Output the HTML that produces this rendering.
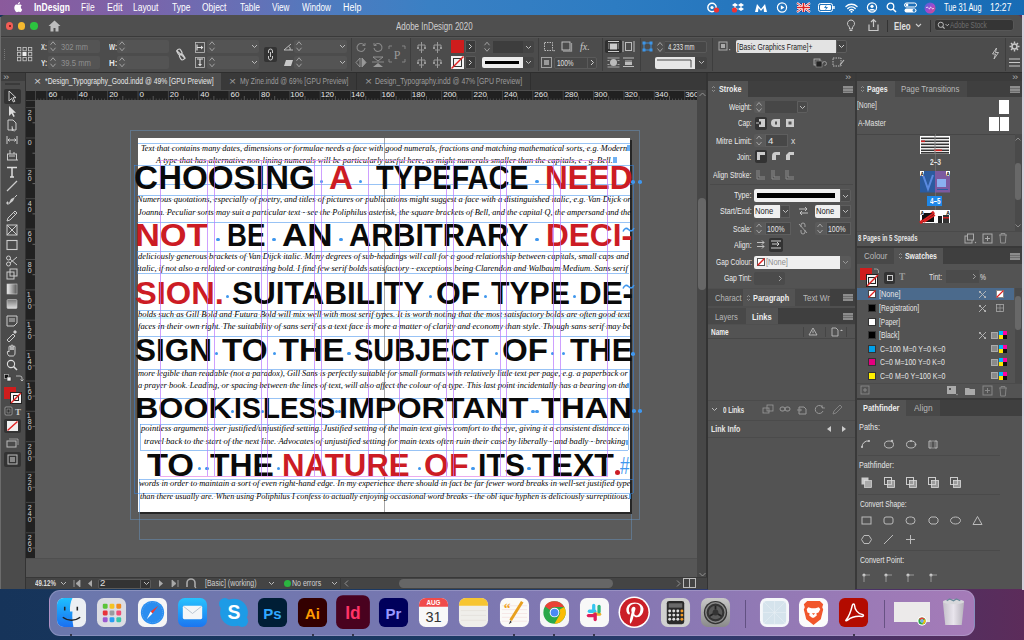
<!DOCTYPE html>
<html><head><meta charset="utf-8"><style>
*{margin:0;padding:0;box-sizing:border-box}
html,body{width:1024px;height:640px;overflow:hidden;background:#1d3b63;font-family:"Liberation Sans",sans-serif}
.a{position:absolute}
svg.a{overflow:visible}
.t{position:absolute;white-space:nowrap;line-height:1;transform-origin:0 0}
.hl{position:absolute;white-space:nowrap;line-height:1;font:bold 31px "Liberation Sans",sans-serif;transform-origin:0 0}
.bt{position:absolute;white-space:nowrap;line-height:1;font:italic 8.8px "Liberation Serif",serif;color:#000;transform-origin:0 0}
.bt b.d{font-weight:normal;color:#58a6ee;-webkit-text-stroke:0}
.bd{position:absolute;width:3.2px;height:3.2px;border-radius:50%;background:#3f97ee}
</style></head><body>
<div class="a" style="left:0px;top:0px;width:1024px;height:640px;background:linear-gradient(90deg,#16345a 0%,#1c3a64 45%,#2e3a6c 70%,#4a3266 85%,#5c2c5a 100%);"></div><div class="a" style="left:1022px;top:15px;width:2px;height:575px;background:#d8d0dc;"></div><div class="a" style="left:0px;top:0px;width:1024px;height:15px;background:linear-gradient(90deg,#8b5a9c 0%,#7e62a8 12%,#6670b6 24%,#4c7cc0 33%,#3a80c4 42%,#2d7cc2 60%,#1f72ba 82%,#186cb5 100%);"></div><svg class="a" style="left:13.5px;top:1.5px;" width="10" height="12" viewBox="0 0 10 12"><g transform="scale(0.82)"><path d="M6.6 2.2c.5-.6.8-1.4.7-2.2-.7 0-1.5.5-2 1.1-.4.5-.8 1.3-.7 2.1.8.1 1.5-.4 2-1zM8.2 6.4c0-1.4 1.1-2 1.2-2.1-.7-1-1.7-1.1-2-1.1-.9-.1-1.7.5-2.1.5-.5 0-1.1-.5-1.9-.5C2.4 3.2 1.4 3.8.9 4.8c-1.1 1.9-.3 4.6.8 6.1.5.7 1.1 1.6 1.9 1.5.8 0 1-.5 1.9-.5s1.1.5 1.9.5c.8 0 1.3-.8 1.8-1.5.6-.8.8-1.6.8-1.7 0 0-1.6-.6-1.6-2.8z" fill="#fff"/></g></svg><div class="t" style="left:33.65px;top:2.20px;color:#fff;font:bold 10px 'Liberation Sans';transform:scale(0.8488,1.0000);">InDesign</div><div class="t" style="left:80.95px;top:2.20px;color:#fff;font:10px 'Liberation Sans';transform:scale(0.8467,1.0000);">File</div><div class="t" style="left:106.61px;top:2.20px;color:#fff;font:10px 'Liberation Sans';transform:scale(0.8937,1.0000);">Edit</div><div class="t" style="left:133.46px;top:2.20px;color:#fff;font:10px 'Liberation Sans';transform:scale(0.8448,1.0000);">Layout</div><div class="t" style="left:171.50px;top:2.20px;color:#fff;font:10px 'Liberation Sans';transform:scale(0.8476,1.0000);">Type</div><div class="t" style="left:201.80px;top:2.20px;color:#fff;font:10px 'Liberation Sans';transform:scale(0.8448,1.0000);">Object</div><div class="t" style="left:239.50px;top:2.20px;color:#fff;font:10px 'Liberation Sans';transform:scale(0.8333,1.0000);">Table</div><div class="t" style="left:271.50px;top:2.20px;color:#fff;font:10px 'Liberation Sans';transform:scale(0.8091,1.0000);">View</div><div class="t" style="left:301.80px;top:2.20px;color:#fff;font:10px 'Liberation Sans';transform:scale(0.8111,1.0000);">Window</div><div class="t" style="left:342.61px;top:2.20px;color:#fff;font:10px 'Liberation Sans';transform:scale(0.8947,1.0000);">Help</div><div class="t" style="left:944.00px;top:2.20px;color:#fff;font:10px 'Liberation Sans';transform:scale(0.7400,1.0000);">Tue 31 Aug</div><div class="t" style="left:990.15px;top:2.20px;color:#fff;font:10px 'Liberation Sans';transform:scale(0.8542,1.0000);">12:27</div><svg class="a" style="left:706px;top:2px;" width="14" height="11" viewBox="0 0 14 11"><circle cx="6" cy="5.5" r="4.2" fill="none" stroke="#fff" stroke-width="1.4"/><circle cx="6" cy="5.5" r="1.6" fill="#fff"/><circle cx="10.5" cy="8" r="2.6" fill="#e33"/></svg><svg class="a" style="left:731px;top:2px;" width="14" height="11" viewBox="0 0 14 11"><path d="M3 1l3 2-3 2-3-2zM9 1l3 2-3 2-3-2zM3 5l3 2-3 2-3-2zM9 5l3 2-3 2-3-2z" fill="#fff" transform="translate(1,0)"/><circle cx="3.5" cy="8" r="2.6" fill="#e33"/></svg><svg class="a" style="left:754px;top:2px;" width="14" height="11" viewBox="0 0 14 11"><path d="M1 10 L3 2 L7 7 L11 2 L13 10 L10 10 L9.5 6 L7 9 L4.5 6 L4 10z" fill="#fff"/></svg><svg class="a" style="left:776px;top:2px;" width="12" height="11" viewBox="0 0 12 11"><circle cx="6" cy="5.5" r="4.6" fill="none" stroke="#fff" stroke-width="1.2"/><path d="M4.8 3.2v4.6l3.6-2.3z" fill="#fff"/></svg><svg class="a" style="left:797px;top:3px;" width="13" height="9" viewBox="0 0 13 9"><rect width="13" height="9" fill="#2a3f8f"/><path d="M0 0L13 9M13 0L0 9" stroke="#fff" stroke-width="2.2"/><path d="M0 0L13 9M13 0L0 9" stroke="#d22" stroke-width="0.9"/><path d="M6.5 0v9M0 4.5h13" stroke="#fff" stroke-width="3"/><path d="M6.5 0v9M0 4.5h13" stroke="#d22" stroke-width="1.6"/></svg><svg class="a" style="left:818px;top:3px;" width="17" height="9" viewBox="0 0 17 9"><rect x="0.5" y="0.5" width="14" height="8" rx="2" fill="none" stroke="#fff" stroke-width="1"/><rect x="2" y="2" width="11" height="5" rx="1" fill="#fff"/><rect x="15.2" y="3" width="1.5" height="3" fill="#fff"/><path d="M8.5 1.5L6 5h2l-1 3 3-4H8z" fill="#2a7bc0"/></svg><svg class="a" style="left:845px;top:2px;" width="13" height="11" viewBox="0 0 13 11"><path d="M1 4.5a8 8 0 0 1 11 0M2.8 6.4a5.3 5.3 0 0 1 7.4 0M4.6 8.2a2.6 2.6 0 0 1 3.8 0" fill="none" stroke="#fff" stroke-width="1.4" stroke-linecap="round"/><circle cx="6.5" cy="9.8" r="1" fill="#fff"/></svg><svg class="a" style="left:866px;top:2px;" width="12" height="11" viewBox="0 0 12 11"><circle cx="6" cy="5.5" r="4.6" fill="none" stroke="#fff" stroke-width="1.2"/><circle cx="6" cy="4.3" r="1.6" fill="#fff"/><path d="M3 8.5c1-1.5 5-1.5 6 0" fill="#fff" stroke="#fff"/></svg><svg class="a" style="left:886px;top:2px;" width="11" height="11" viewBox="0 0 11 11"><circle cx="4.5" cy="4.5" r="3.3" fill="none" stroke="#fff" stroke-width="1.3"/><path d="M7 7l3 3" stroke="#fff" stroke-width="1.5"/></svg><svg class="a" style="left:904px;top:2px;" width="13" height="11" viewBox="0 0 13 11"><rect x="0.5" y="1" width="12" height="4" rx="2" fill="none" stroke="#fff"/><circle cx="3" cy="3" r="1.4" fill="#fff"/><rect x="0.5" y="6.5" width="12" height="4" rx="2" fill="#fff"/><circle cx="10" cy="8.5" r="1.4" fill="#2a7bc0"/></svg><svg class="a" style="left:924px;top:1.5px;" width="12" height="12" viewBox="0 0 12 12"><defs><linearGradient id="sg" x1="0" y1="0" x2="1" y2="1"><stop offset="0" stop-color="#3a6cd8"/><stop offset="0.5" stop-color="#a04ad0"/><stop offset="1" stop-color="#e04a7a"/></linearGradient></defs><circle cx="6" cy="6" r="5.5" fill="url(#sg)"/><path d="M2 6c2-3 3 3 4 0s2 3 4 0" stroke="#fff" stroke-width="0.8" fill="none"/></svg><div class="a" style="left:0px;top:15px;width:1022px;height:574px;background:#4f4f4f;border-radius:5px 5px 0 0;overflow:hidden"></div><div class="a" style="left:0px;top:17px;width:1px;height:572px;background:#6c6c6c;"></div><div class="a" style="left:1px;top:36px;width:1021px;height:1px;background:#3a3a3a;"></div><div class="a" style="left:5.9px;top:22.3px;width:7.4px;height:7.4px;border-radius:50%;background:#f25d55"></div><div class="a" style="left:18.1px;top:22.3px;width:7.4px;height:7.4px;border-radius:50%;background:#f6b92f"></div><div class="a" style="left:30.3px;top:22.3px;width:7.4px;height:7.4px;border-radius:50%;background:#2cc43f"></div><div class="a" style="left:8.6px;top:25px;width:2px;height:2px;border-radius:50%;background:#6a1010"></div><svg class="a" style="left:48px;top:20px;" width="13" height="12" viewBox="0 0 13 12"><path d="M6.5 0.5L0.5 6h2v5.5h3V8h2v3.5h3V6h2z" fill="#bdbdbd"/></svg><div class="t" style="left:395.50px;top:20.50px;color:#cfcfcf;font:10px 'Liberation Sans';transform:scale(0.7969,1.0000);">Adobe InDesign 2020</div><svg class="a" style="left:846px;top:19px;" width="10" height="13" viewBox="0 0 10 13"><path d="M5 1a3.6 3.6 0 0 0-2.2 6.4c.5.4.7.9.7 1.6v1h3V9c0-.7.2-1.2.7-1.6A3.6 3.6 0 0 0 5 1z" fill="none" stroke="#c8c8c8" stroke-width="1"/><path d="M3.6 11.5h2.8" stroke="#c8c8c8"/></svg><svg class="a" style="left:867px;top:18px;" width="13" height="14" viewBox="0 0 13 14"><path d="M2 6.5v6h9v-6" fill="none" stroke="#c8c8c8" stroke-width="1.2"/><path d="M6.5 9V1.5M4 4l2.5-2.5L9 4" fill="none" stroke="#c8c8c8" stroke-width="1.2"/></svg><div class="a" style="left:887px;top:20px;width:1px;height:12px;background:#333;"></div><div class="t" style="left:894.01px;top:20.50px;color:#e0e0e0;font:bold 10px 'Liberation Sans';transform:scale(0.7850,1.0000);">Eleo</div><svg class="a" style="left:915px;top:23px;" width="7" height="5" viewBox="0 0 7 5"><path d="M1 1l2.5 2.5L6 1" fill="none" stroke="#ccc" stroke-width="1.1"/></svg><div class="a" style="left:930px;top:20px;width:1px;height:12px;background:#333;"></div><div class="a" style="left:934px;top:18.8px;width:80px;height:12.5px;border-radius:3px;background:#353535;border:1px solid #575757"></div><svg class="a" style="left:937px;top:21px;" width="13" height="9" viewBox="0 0 13 9"><circle cx="3.8" cy="3.8" r="2.6" fill="none" stroke="#bbb" stroke-width="1"/><path d="M5.6 5.6l2 2" stroke="#bbb" stroke-width="1.1"/><path d="M8.5 3l1.8 1.8L12 3" fill="none" stroke="#bbb" stroke-width="0.9"/></svg><div class="t" style="left:950.00px;top:20.20px;color:#6e6e6e;font:9px 'Liberation Sans';transform:scale(0.7216,1.0000);">Adobe Stock</div><div class="a" style="left:1px;top:37px;width:1021px;height:35px;background:#4c4c4c;"></div><div class="a" style="left:1px;top:37px;width:1021px;height:1px;background:#555;"></div><div class="a" style="left:4px;top:49px;width:1px;height:1px;background:#777;"></div><div class="a" style="left:4px;top:51px;width:1px;height:1px;background:#777;"></div><div class="a" style="left:4px;top:53px;width:1px;height:1px;background:#777;"></div><div class="a" style="left:4px;top:55px;width:1px;height:1px;background:#777;"></div><div class="a" style="left:4px;top:57px;width:1px;height:1px;background:#777;"></div><div class="a" style="left:4px;top:59px;width:1px;height:1px;background:#777;"></div><svg class="a" style="left:16px;top:46px;" width="18" height="16" viewBox="0 0 18 16"><rect x="1.5" y="1.5" width="3.3" height="3.3" fill="none" stroke="#c8c8c8" stroke-width="0.8"/><rect x="7.0" y="1.5" width="3.3" height="3.3" fill="none" stroke="#c8c8c8" stroke-width="0.8"/><rect x="12.5" y="1.5" width="3.3" height="3.3" fill="none" stroke="#c8c8c8" stroke-width="0.8"/><rect x="1.5" y="6.5" width="3.3" height="3.3" fill="none" stroke="#c8c8c8" stroke-width="0.8"/><rect x="6.5" y="6" width="4" height="4" fill="#eee"/><rect x="12.5" y="6.5" width="3.3" height="3.3" fill="none" stroke="#c8c8c8" stroke-width="0.8"/><rect x="1.5" y="11.5" width="3.3" height="3.3" fill="none" stroke="#c8c8c8" stroke-width="0.8"/><rect x="7.0" y="11.5" width="3.3" height="3.3" fill="none" stroke="#c8c8c8" stroke-width="0.8"/><rect x="12.5" y="11.5" width="3.3" height="3.3" fill="none" stroke="#c8c8c8" stroke-width="0.8"/></svg><div class="t" style="left:41.00px;top:42.00px;color:#e6e6e6;font:bold 8.5px 'Liberation Sans';transform:scale(0.6875,1.0000);">X:</div><div class="t" style="left:41.00px;top:57.50px;color:#e6e6e6;font:bold 8.5px 'Liberation Sans';transform:scale(0.7857,1.0000);">Y:</div><div class="t" style="left:109.00px;top:42.00px;color:#e6e6e6;font:bold 8.5px 'Liberation Sans';transform:scale(0.7500,1.0000);">W:</div><div class="t" style="left:109.00px;top:57.50px;color:#e6e6e6;font:bold 8.5px 'Liberation Sans';transform:scale(0.9375,1.0000);">H:</div><div class="a" style="left:48px;top:40px;width:52px;height:12.5px;background:#545454;border-radius:2px"></div><div class="a" style="left:48px;top:40px;width:10px;height:12.5px;background:#555;border-radius:2px 0 0 2px"></div><svg class="a" style="left:48px;top:40px;" width="10" height="12.5" viewBox="0 0 10 12.5"><path d="M2.5 4.75l2.5-3 2.5 3M2.5 7.75l2.5 3 2.5-3" fill="none" stroke="#aaa" stroke-width="0.9"/></svg><div class="a" style="left:48px;top:56px;width:52px;height:12.5px;background:#545454;border-radius:2px"></div><div class="a" style="left:48px;top:56px;width:10px;height:12.5px;background:#555;border-radius:2px 0 0 2px"></div><svg class="a" style="left:48px;top:56px;" width="10" height="12.5" viewBox="0 0 10 12.5"><path d="M2.5 4.75l2.5-3 2.5 3M2.5 7.75l2.5 3 2.5-3" fill="none" stroke="#aaa" stroke-width="0.9"/></svg><div class="a" style="left:117px;top:40px;width:52px;height:12.5px;background:#545454;border-radius:2px"></div><div class="a" style="left:117px;top:40px;width:10px;height:12.5px;background:#555;border-radius:2px 0 0 2px"></div><svg class="a" style="left:117px;top:40px;" width="10" height="12.5" viewBox="0 0 10 12.5"><path d="M2.5 4.75l2.5-3 2.5 3M2.5 7.75l2.5 3 2.5-3" fill="none" stroke="#aaa" stroke-width="0.9"/></svg><div class="a" style="left:117px;top:56px;width:52px;height:12.5px;background:#545454;border-radius:2px"></div><div class="a" style="left:117px;top:56px;width:10px;height:12.5px;background:#555;border-radius:2px 0 0 2px"></div><svg class="a" style="left:117px;top:56px;" width="10" height="12.5" viewBox="0 0 10 12.5"><path d="M2.5 4.75l2.5-3 2.5 3M2.5 7.75l2.5 3 2.5-3" fill="none" stroke="#aaa" stroke-width="0.9"/></svg><div class="t" style="left:61.12px;top:41.50px;color:#8f8f8f;font:8.5px 'Liberation Sans';transform:scale(0.8793,1.0000);">302 mm</div><div class="t" style="left:61.09px;top:57.50px;color:#8f8f8f;font:8.5px 'Liberation Sans';transform:scale(0.9062,1.0000);">39.5 mm</div><svg class="a" style="left:175px;top:48px;" width="12" height="13" viewBox="0 0 12 13"><rect x="2.5" y="1" width="4" height="6" rx="2" fill="none" stroke="#d0d0d0" stroke-width="1.1" transform="rotate(-30 4.5 4)"/><rect x="5" y="6" width="4" height="6" rx="2" fill="none" stroke="#d0d0d0" stroke-width="1.1" transform="rotate(-30 7 9)"/><path d="M1.5 2.5l9 8" stroke="#d0d0d0" stroke-width="1.1"/></svg><svg class="a" style="left:195px;top:42px;" width="10" height="11" viewBox="0 0 10 11"><rect x="0.5" y="0.5" width="9" height="10" fill="none" stroke="#bdbdbd" stroke-width="0.8"/><path d="M2 2.5v6M2 5.5h6" fill="none" stroke="#e0e0e0" stroke-width="1.1"/><path d="M6 3.5l2.3 2-2.3 2z" fill="#e0e0e0"/></svg><svg class="a" style="left:195px;top:57px;" width="10" height="11" viewBox="0 0 10 11"><rect x="0.5" y="0.5" width="9" height="10" fill="none" stroke="#bdbdbd" stroke-width="0.8"/><path d="M2 2h6M5 2v6" fill="none" stroke="#e0e0e0" stroke-width="1.1"/><path d="M3 7l2 2.3 2-2.3z" fill="#e0e0e0"/></svg><div class="a" style="left:207px;top:40px;width:52px;height:12.5px;background:#545454;border-radius:2px"></div><svg class="a" style="left:207px;top:40px;" width="10" height="12.5" viewBox="0 0 10 12.5"><path d="M2.5 4.75l2.5-3 2.5 3M2.5 7.75l2.5 3 2.5-3" fill="none" stroke="#aaa" stroke-width="0.9"/></svg><svg class="a" style="left:251px;top:44px;" width="7" height="5" viewBox="0 0 7 5"><path d="M1 1l2.5 2.5L6 1" fill="none" stroke="#bbb" stroke-width="1"/></svg><div class="a" style="left:207px;top:56px;width:52px;height:12.5px;background:#545454;border-radius:2px"></div><svg class="a" style="left:207px;top:56px;" width="10" height="12.5" viewBox="0 0 10 12.5"><path d="M2.5 4.75l2.5-3 2.5 3M2.5 7.75l2.5 3 2.5-3" fill="none" stroke="#aaa" stroke-width="0.9"/></svg><svg class="a" style="left:251px;top:60px;" width="7" height="5" viewBox="0 0 7 5"><path d="M1 1l2.5 2.5L6 1" fill="none" stroke="#bbb" stroke-width="1"/></svg><div class="a" style="left:264px;top:47px;width:13px;height:15px;background:#333;border-radius:2px"></div><svg class="a" style="left:266px;top:48px;" width="9" height="13" viewBox="0 0 9 13"><path d="M2.5 5V3a2 2 0 0 1 4 0v2M2.5 8v2a2 2 0 0 0 4 0V8M4.5 4v5" fill="none" stroke="#c8c8c8" stroke-width="1"/></svg><svg class="a" style="left:283px;top:43px;" width="11" height="8" viewBox="0 0 11 8"><path d="M1 7h9M1 7l7-6M6 3.5a3 3 0 0 1 1 3.5" fill="none" stroke="#c8c8c8" stroke-width="0.9"/></svg><svg class="a" style="left:283px;top:59px;" width="11" height="8" viewBox="0 0 11 8"><path d="M3 1h7l-2 6H1z" fill="#c8c8c8"/></svg><div class="a" style="left:294px;top:40px;width:53px;height:12.5px;background:#545454;border-radius:2px"></div><svg class="a" style="left:294px;top:40px;" width="10" height="12.5" viewBox="0 0 10 12.5"><path d="M2.5 4.75l2.5-3 2.5 3M2.5 7.75l2.5 3 2.5-3" fill="none" stroke="#aaa" stroke-width="0.9"/></svg><svg class="a" style="left:339px;top:44px;" width="7" height="5" viewBox="0 0 7 5"><path d="M1 1l2.5 2.5L6 1" fill="none" stroke="#bbb" stroke-width="1"/></svg><div class="a" style="left:294px;top:56px;width:53px;height:12.5px;background:#545454;border-radius:2px"></div><svg class="a" style="left:294px;top:56px;" width="10" height="12.5" viewBox="0 0 10 12.5"><path d="M2.5 4.75l2.5-3 2.5 3M2.5 7.75l2.5 3 2.5-3" fill="none" stroke="#aaa" stroke-width="0.9"/></svg><svg class="a" style="left:339px;top:60px;" width="7" height="5" viewBox="0 0 7 5"><path d="M1 1l2.5 2.5L6 1" fill="none" stroke="#bbb" stroke-width="1"/></svg><div class="a" style="left:351px;top:38px;width:1px;height:33px;background:#3e3e3e;"></div><svg class="a" style="left:355px;top:41px;" width="12" height="12" viewBox="0 0 12 12"><path d="M9.5 4.5A4 4 0 1 0 10 7" fill="none" stroke="#888" stroke-width="1.1"/><path d="M7.5 4.5h2.5V2" fill="none" stroke="#888"/></svg><svg class="a" style="left:372px;top:41px;" width="12" height="12" viewBox="0 0 12 12"><path d="M2.5 4.5A4 4 0 1 1 2 7" fill="none" stroke="#888" stroke-width="1.1"/><path d="M4.5 4.5H2V2" fill="none" stroke="#888"/></svg><svg class="a" style="left:355px;top:57px;" width="12" height="11" viewBox="0 0 12 11"><path d="M5 1v9L1 5.5zM7 1v9l4-4.5z" fill="none" stroke="#999" stroke-width="0.9"/><path d="M7 1v9l4-4.5z" fill="#999"/></svg><svg class="a" style="left:372px;top:56px;" width="12" height="12" viewBox="0 0 12 12"><path d="M1 1h10L6 5z" fill="none" stroke="#999" stroke-width="0.9"/><path d="M1 11h10L6 7z" fill="#999"/><path d="M0 6h12" stroke="#999" stroke-width="0.8"/></svg><svg class="a" style="left:388px;top:45px;" width="18" height="18" viewBox="0 0 18 18"><path d="M1 4V1h3M14 1h3v3M1 14v3h3M14 17h3v-3" fill="none" stroke="#8a8a8a" stroke-width="0.9"/><text x="9" y="13.5" font-family="Liberation Serif" font-size="12" fill="#9a9a9a" text-anchor="middle">P</text></svg><div class="a" style="left:410px;top:38px;width:1px;height:33px;background:#3e3e3e;"></div><svg class="a" style="left:416px;top:42px;" width="11" height="11" viewBox="0 0 11 11"><path d="M5.5 0v3M2 3h7M2 3v3M9 3v3M5.5 3v8M3 8h5" fill="none" stroke="#999" stroke-width="1"/><rect x="1" y="5" width="2" height="2" fill="#999"/><rect x="8" y="5" width="2" height="2" fill="#999"/></svg><svg class="a" style="left:432px;top:42px;" width="11" height="11" viewBox="0 0 11 11"><path d="M5.5 0v3M2 3h7M2 3v3M9 3v3M5.5 3v8M3 8h5" fill="none" stroke="#999" stroke-width="1"/><rect x="1" y="5" width="2" height="2" fill="#999"/><rect x="8" y="5" width="2" height="2" fill="#999"/></svg><svg class="a" style="left:416px;top:57px;" width="11" height="11" viewBox="0 0 11 11"><path d="M5.5 0v3M2 3h7M2 3v3M9 3v3M5.5 3v8M3 8h5" fill="none" stroke="#999" stroke-width="1"/><rect x="1" y="5" width="2" height="2" fill="#999"/><rect x="8" y="5" width="2" height="2" fill="#999"/></svg><svg class="a" style="left:432px;top:57px;" width="11" height="11" viewBox="0 0 11 11"><path d="M5.5 0v3M2 3h7M2 3v3M9 3v3M5.5 3v8M3 8h5" fill="none" stroke="#999" stroke-width="1"/><rect x="1" y="5" width="2" height="2" fill="#999"/><rect x="8" y="5" width="2" height="2" fill="#999"/></svg><div class="a" style="left:451px;top:40px;width:12.5px;height:12.5px;background:#cf1d1d;"></div><div class="a" style="left:451px;top:56px;width:12.5px;height:12.5px;background:#f2f2f2;"></div><div class="a" style="left:453px;top:58px;width:8.5px;height:8.5px;background:none;border:1.2px solid #333"></div><svg class="a" style="left:451px;top:56px;" width="13" height="13" viewBox="0 0 13 13"><path d="M0.5 12.5L12.5 0.5" stroke="#e02020" stroke-width="1.4"/></svg><div class="a" style="left:465px;top:40px;width:10.5px;height:12.5px;background:#3b3b3b;border:1px solid #5a5a5a;border-radius:1px"></div><svg class="a" style="left:467px;top:43px;" width="7" height="7" viewBox="0 0 7 7"><path d="M2 1l2.5 2.5L2 6" fill="none" stroke="#ccc" stroke-width="1"/></svg><div class="a" style="left:465px;top:56px;width:10.5px;height:12.5px;background:#3b3b3b;border:1px solid #5a5a5a;border-radius:1px"></div><svg class="a" style="left:467px;top:59px;" width="7" height="7" viewBox="0 0 7 7"><path d="M2 1l2.5 2.5L2 6" fill="none" stroke="#ccc" stroke-width="1"/></svg><div class="a" style="left:482px;top:41px;width:52px;height:11.5px;background:#444;border-radius:2px"></div><div class="a" style="left:482px;top:41px;width:11px;height:11.5px;background:#4d4d4d;"></div><svg class="a" style="left:482px;top:41px;" width="10" height="11.5" viewBox="0 0 10 11.5"><path d="M2.5 4.25l2.5-3 2.5 3M2.5 7.25l2.5 3 2.5-3" fill="none" stroke="#aaa" stroke-width="0.9"/></svg><div class="a" style="left:493px;top:41px;width:30px;height:11.5px;background:#3d3d3d;"></div><svg class="a" style="left:525px;top:45px;" width="7" height="5" viewBox="0 0 7 5"><path d="M1 1l2.5 2.5L6 1" fill="none" stroke="#bbb" stroke-width="1"/></svg><div class="a" style="left:482px;top:56.5px;width:41px;height:11.5px;background:#ececec;border-radius:2px 0 0 2px"></div><div class="a" style="left:485px;top:60.5px;width:34px;height:3.5px;background:#000;"></div><div class="a" style="left:523px;top:56.5px;width:11px;height:11.5px;background:#444;border-radius:0 2px 2px 0"></div><svg class="a" style="left:525px;top:60px;" width="7" height="5" viewBox="0 0 7 5"><path d="M1 1l2.5 2.5L6 1" fill="none" stroke="#bbb" stroke-width="1"/></svg><div class="a" style="left:538px;top:38px;width:1px;height:33px;background:#3e3e3e;"></div><svg class="a" style="left:543px;top:41px;" width="12" height="11" viewBox="0 0 12 11"><rect x="1.5" y="1.5" width="8" height="8" fill="none" stroke="#c8c8c8" stroke-dasharray="1.5 1" stroke-width="0.9"/><rect x="10.5" y="9" width="1.2" height="1.2" fill="#c8c8c8"/></svg><svg class="a" style="left:561px;top:41px;" width="11" height="11" viewBox="0 0 11 11"><rect x="1" y="1" width="8" height="8" fill="none" stroke="#c8c8c8" stroke-width="0.9"/><path d="M2 10h8.5V2" stroke="#999" stroke-width="1.3" fill="none"/></svg><div class="t" style="left:580.00px;top:41.00px;color:#c8c8c8;font:italic 10px 'Liberation Serif';">fx.</div><svg class="a" style="left:541px;top:57px;" width="11" height="11" viewBox="0 0 11 11"><rect x="0.5" y="0.5" width="10" height="10" fill="none" stroke="#aaa" stroke-width="0.9"/><rect x="3" y="3" width="5" height="5" fill="#999"/></svg><div class="a" style="left:554px;top:56.5px;width:43px;height:12px;background:#474747;border:1px solid #5a5a5a;border-radius:2px"></div><div class="t" style="left:557.24px;top:57.50px;color:#e0e0e0;font:8.5px 'Liberation Sans';transform:scale(0.7619,1.0000);">100%</div><div class="a" style="left:587px;top:56.5px;width:1px;height:12px;background:#5a5a5a;"></div><svg class="a" style="left:589px;top:59px;" width="7" height="7" viewBox="0 0 7 7"><path d="M2 1l2.5 2.5L2 6" fill="none" stroke="#ccc" stroke-width="1"/></svg><div class="a" style="left:602px;top:38px;width:1px;height:33px;background:#3e3e3e;"></div><div class="a" style="left:605px;top:40px;width:17px;height:13px;background:#303030;border-radius:2px"></div><svg class="a" style="left:607px;top:41px;" width="13" height="11" viewBox="0 0 13 11"><path d="M1 0.5h11M1 10.5h11" stroke="#ccc"/><rect x="3" y="2.5" width="7" height="6" fill="#ccc"/><path d="M1 3h1.5M1 5h1.5M1 7h1.5M10.5 3H12M10.5 5H12M10.5 7H12" stroke="#ccc" stroke-width="0.8"/></svg><svg class="a" style="left:622px;top:41px;" width="13" height="11" viewBox="0 0 13 11"><rect x="3.5" y="1.5" width="6" height="8" fill="none" stroke="#bbb"/><path d="M1 0v11M12 0v11" stroke="#bbb"/></svg><svg class="a" style="left:607px;top:57px;" width="13" height="11" viewBox="0 0 13 11"><circle cx="6.5" cy="5.5" r="3.5" fill="#bbb"/><path d="M0.5 1h12M0.5 10h12M0.5 3.5h2M10.5 3.5h2M0.5 7.5h2M10.5 7.5h2" stroke="#bbb" stroke-width="0.8"/></svg><svg class="a" style="left:622px;top:57px;" width="13" height="11" viewBox="0 0 13 11"><path d="M1 1h11M3 4h7M1 9.5h11" stroke="#bbb" stroke-width="1"/><rect x="3" y="5" width="7" height="3" fill="#bbb"/></svg><div class="a" style="left:640px;top:38px;width:1px;height:33px;background:#3e3e3e;"></div><svg class="a" style="left:642px;top:41px;" width="11" height="11" viewBox="0 0 11 11"><rect x="2" y="2" width="7" height="7" fill="none" stroke="#3d95e8" stroke-width="0.9"/><rect x="0.5" y="0.5" width="3" height="3" fill="#3d95e8"/><rect x="7.5" y="0.5" width="3" height="3" fill="#3d95e8"/><rect x="0.5" y="7.5" width="3" height="3" fill="#3d95e8"/><rect x="7.5" y="7.5" width="3" height="3" fill="#3d95e8"/></svg><div class="a" style="left:655px;top:40.5px;width:52px;height:12px;background:#474747;border:1px solid #5a5a5a;border-radius:2px"></div><div class="a" style="left:655px;top:40.5px;width:10px;height:12px;background:#4f4f4f;"></div><svg class="a" style="left:655px;top:40.5px;" width="10" height="12" viewBox="0 0 10 12"><path d="M2.5 4.5l2.5-3 2.5 3M2.5 7.5l2.5 3 2.5-3" fill="none" stroke="#aaa" stroke-width="0.9"/></svg><div class="t" style="left:668.00px;top:41.50px;color:#e6e6e6;font:8.5px 'Liberation Sans';transform:scale(0.7027,1.0000);">4.233 mm</div><div class="a" style="left:655px;top:56.5px;width:40px;height:12px;background:#e6e6e6;border-radius:2px 0 0 2px"></div><svg class="a" style="left:656px;top:58px;" width="38" height="10" viewBox="0 0 38 10"><path d="M1 2H35V9.5" fill="none" stroke="#222" stroke-width="0.8"/></svg><div class="a" style="left:695px;top:56.5px;width:12px;height:12px;background:#444;border-radius:0 2px 2px 0"></div><svg class="a" style="left:698px;top:60px;" width="7" height="5" viewBox="0 0 7 5"><path d="M1 1l2.5 2.5L6 1" fill="none" stroke="#bbb" stroke-width="1"/></svg><div class="a" style="left:712px;top:38px;width:1px;height:33px;background:#3e3e3e;"></div><svg class="a" style="left:718px;top:41px;" width="14" height="11" viewBox="0 0 14 11"><rect x="1" y="1" width="8" height="8" fill="none" stroke="#aaa"/><rect x="3" y="3" width="4" height="4" fill="#aaa"/><rect x="11" y="8" width="1.2" height="1.2" fill="#aaa"/></svg><div class="a" style="left:735.5px;top:40px;width:100px;height:12.5px;background:#e3e3e3;border-radius:2px 0 0 2px"></div><div class="t" style="left:737.24px;top:41.50px;color:#1a1a1a;font:9px 'Liberation Sans';transform:scale(0.7602,1.0000);">[Basic Graphics Frame]+</div><div class="a" style="left:835.5px;top:40px;width:11px;height:12.5px;background:#444;border:1px solid #5d5d5d;border-radius:0 2px 2px 0"></div><svg class="a" style="left:837.5px;top:44px;" width="7" height="5" viewBox="0 0 7 5"><path d="M1 1l2.5 2.5L6 1" fill="none" stroke="#ccc" stroke-width="1"/></svg><svg class="a" style="left:813px;top:57px;" width="13" height="11" viewBox="0 0 13 11"><rect x="1" y="2" width="6" height="6" fill="#555" stroke="#bbb" stroke-width="0.8"/><rect x="3" y="4" width="6" height="6" fill="#222" stroke="#999" stroke-width="0.6"/><path d="M9.5 6.5a2 2 0 1 1 2 2" fill="none" stroke="#aaa" stroke-width="0.8"/></svg><svg class="a" style="left:832px;top:57px;" width="14" height="11" viewBox="0 0 14 11"><rect x="1" y="1" width="8" height="8" fill="none" stroke="#bbb" stroke-dasharray="1.5 1"/><path d="M8 8l4-5" stroke="#bbb" stroke-width="1.2"/></svg><svg class="a" style="left:991px;top:47px;" width="9" height="13" viewBox="0 0 9 13"><path d="M5.5 1L1.5 7h3L3 12l4.5-6.5h-3z" fill="none" stroke="#c8c8c8" stroke-width="0.9"/></svg><div class="a" style="left:1005px;top:38px;width:1px;height:33px;background:#3e3e3e;"></div><svg class="a" style="left:1009px;top:41px;" width="11" height="11" viewBox="0 0 11 11"><circle cx="5.5" cy="5.5" r="2.5" fill="none" stroke="#c8c8c8" stroke-width="1.6"/><path d="M5.5 0.5v2M5.5 8.5v2M0.5 5.5h2M8.5 5.5h2M2 2l1.4 1.4M7.6 7.6L9 9M2 9l1.4-1.4M7.6 3.4L9 2" stroke="#c8c8c8" stroke-width="1.4"/></svg><svg class="a" style="left:1009px;top:58px;" width="11" height="9" viewBox="0 0 11 9"><path d="M0 1h11M0 4.5h11M0 8h11" stroke="#c8c8c8" stroke-width="1"/></svg><div class="a" style="left:1px;top:72px;width:1021px;height:1px;background:#2e2e2e;"></div><div class="a" style="left:26px;top:73px;width:681px;height:17px;background:#393939;"></div><div class="a" style="left:26px;top:73px;width:195px;height:17px;background:#4e4e4e;"></div><div class="t" style="left:33.90px;top:75.30px;color:#cfcfcf;font:11px 'Liberation Sans';transform:scale(1.1000,1.0000);">×</div><div class="t" style="left:45.00px;top:76.30px;color:#e8e8e8;font:9px 'Liberation Sans';transform:scale(0.7534,1.0000);">*Design_Typography_Good.indd @ 49% [GPU Preview]</div><div class="t" style="left:229.40px;top:75.30px;color:#9a9a9a;font:11px 'Liberation Sans';transform:scale(1.1000,1.0000);">×</div><div class="t" style="left:240.25px;top:76.30px;color:#9c9c9c;font:9px 'Liberation Sans';transform:scale(0.7465,1.0000);">My Zine.indd @ 69% [GPU Preview]</div><div class="a" style="left:356px;top:73px;width:1px;height:17px;background:#2f2f2f;"></div><div class="t" style="left:364.90px;top:75.30px;color:#9a9a9a;font:11px 'Liberation Sans';transform:scale(1.1000,1.0000);">×</div><div class="t" style="left:375.24px;top:76.30px;color:#9c9c9c;font:9px 'Liberation Sans';transform:scale(0.7644,1.0000);">Design_Typography.indd @ 47% [GPU Preview]</div><div class="a" style="left:530px;top:73px;width:1px;height:17px;background:#2f2f2f;"></div><div class="a" style="left:1px;top:73px;width:24px;height:516px;background:#4b4b4b;"></div><div class="a" style="left:1px;top:73px;width:24px;height:8px;background:#3d3d3d;"></div><div class="t" style="left:2.75px;top:71.50px;color:#aaa;font:9px 'Liberation Sans';transform:scale(1.2500,1.0000);">»</div><div class="a" style="left:5px;top:83px;width:15px;height:2px;background:#3a3a3a;"></div><div class="a" style="left:25px;top:73px;width:1px;height:516px;background:#333;"></div><div class="a" style="left:4px;top:89px;width:17px;height:15px;background:#333;border-radius:2px"></div><svg class="a" style="left:5px;top:89px;" width="14" height="14" viewBox="0 0 14 14"><path d="M4 2v10l2.6-2.6 1.8 3.6 1.4-.7-1.8-3.6H11z" fill="none" stroke="#ddd" stroke-width="0.9"/></svg><svg class="a" style="left:5px;top:104px;" width="14" height="14" viewBox="0 0 14 14"><path d="M4 2v10l2.6-2.6 1.8 3.6 1.4-.7-1.8-3.6H11z" fill="#ddd"/></svg><svg class="a" style="left:5px;top:118px;" width="14" height="14" viewBox="0 0 14 14"><path d="M3 2h5l3 3v7H3z" fill="none" stroke="#ccc"/><path d="M7 8v5l1.3-1.3 1 2" fill="#ccc" stroke="#ccc" stroke-width="0.6"/></svg><svg class="a" style="left:5px;top:133px;" width="14" height="14" viewBox="0 0 14 14"><path d="M2 3v8M12 3v8M3 7h8M4.5 5.5L3 7l1.5 1.5M9.5 5.5L11 7 9.5 8.5" fill="none" stroke="#ccc" stroke-width="1"/></svg><svg class="a" style="left:5px;top:148px;" width="14" height="14" viewBox="0 0 14 14"><rect x="2.5" y="6" width="9" height="6" fill="none" stroke="#ccc"/><path d="M5 2v4M9 4v2M4 8h6" stroke="#ccc"/><path d="M12 11l1 1-1 1" fill="#ccc"/></svg><svg class="a" style="left:5px;top:165px;" width="14" height="14" viewBox="0 0 14 14"><path d="M2 2.5h10M7 2.5V12M5 12h4" fill="none" stroke="#ddd" stroke-width="1.5"/></svg><svg class="a" style="left:5px;top:179px;" width="14" height="14" viewBox="0 0 14 14"><path d="M2 12L12 2" stroke="#ccc" stroke-width="1.2"/></svg><svg class="a" style="left:5px;top:194px;" width="14" height="14" viewBox="0 0 14 14"><path d="M3 11l3-6 4-2-2 4z" fill="#ccc"/><path d="M1 9h3M2.5 7.5v3M10 3l2-2" stroke="#ccc"/></svg><svg class="a" style="left:5px;top:209px;" width="14" height="14" viewBox="0 0 14 14"><path d="M2 12l1-3 7-7 2 2-7 7z" fill="none" stroke="#ccc"/><path d="M8.5 3.5l2 2" stroke="#ccc"/></svg><svg class="a" style="left:5px;top:223px;" width="14" height="14" viewBox="0 0 14 14"><rect x="2" y="2" width="10" height="10" fill="none" stroke="#ccc"/><path d="M2 2l10 10M12 2L2 12" stroke="#ccc"/></svg><svg class="a" style="left:5px;top:238px;" width="14" height="14" viewBox="0 0 14 14"><rect x="2" y="2.5" width="10" height="9" fill="none" stroke="#ccc" stroke-width="1.1"/></svg><svg class="a" style="left:5px;top:254px;" width="14" height="14" viewBox="0 0 14 14"><circle cx="3.5" cy="10" r="2" fill="none" stroke="#ccc"/><circle cx="3.5" cy="4" r="2" fill="none" stroke="#ccc"/><path d="M5 5l7 6M5 9l7-6" stroke="#ccc"/></svg><svg class="a" style="left:5px;top:267px;" width="14" height="14" viewBox="0 0 14 14"><rect x="2" y="5" width="7" height="7" fill="none" stroke="#ccc"/><rect x="5" y="2" width="7" height="7" fill="none" stroke="#ccc"/></svg><svg class="a" style="left:5px;top:282px;" width="14" height="14" viewBox="0 0 14 14"><defs><linearGradient id="gr1"><stop offset="0" stop-color="#eee"/><stop offset="1" stop-color="#555"/></linearGradient></defs><rect x="2" y="2" width="10" height="10" fill="url(#gr1)" stroke="#ccc" stroke-width="0.6"/></svg><svg class="a" style="left:5px;top:297px;" width="14" height="14" viewBox="0 0 14 14"><defs><linearGradient id="gr2" x1="0" y1="0" x2="0" y2="1"><stop offset="0" stop-color="#777"/><stop offset="1" stop-color="#ddd"/></linearGradient></defs><rect x="2" y="2.5" width="10" height="9" rx="1" fill="url(#gr2)" stroke="#ccc" stroke-width="0.6"/></svg><svg class="a" style="left:5px;top:314px;" width="14" height="14" viewBox="0 0 14 14"><path d="M2 2h10v7l-3 3H2z" fill="none" stroke="#ccc"/><path d="M4 5h6M4 7h6" stroke="#ccc"/></svg><svg class="a" style="left:5px;top:328px;" width="14" height="14" viewBox="0 0 14 14"><path d="M2 12l6-6 2 2-6 6z" fill="none" stroke="#ccc"/><path d="M8 4l2-2 2 2-2 2z" fill="#ccc"/></svg><svg class="a" style="left:5px;top:344px;" width="14" height="14" viewBox="0 0 14 14"><path d="M4 12c-2-2-2-4-1-5l1 1V3a1 1 0 0 1 2 0v3V2a1 1 0 0 1 2 0v4-3a1 1 0 0 1 2 0v6c0 2-1 3-2 3z" fill="none" stroke="#ddd" stroke-width="0.9"/></svg><svg class="a" style="left:5px;top:358px;" width="14" height="14" viewBox="0 0 14 14"><circle cx="6" cy="6" r="3.6" fill="none" stroke="#ddd" stroke-width="1.1"/><path d="M8.6 8.6L12 12" stroke="#ddd" stroke-width="1.5"/></svg><svg class="a" style="left:4px;top:374px;" width="8" height="8" viewBox="0 0 8 8"><rect x="0.5" y="0.5" width="4" height="4" fill="#111" stroke="#ccc" stroke-width="0.6"/><rect x="3" y="3" width="4" height="4" fill="#eee" stroke="#333" stroke-width="0.6"/></svg><svg class="a" style="left:15px;top:374px;" width="8" height="8" viewBox="0 0 8 8"><path d="M1 2h4a2 2 0 0 1 2 2v3M5.5 5.5L7 7l1.5-1.5" fill="none" stroke="#ccc" stroke-width="0.8"/></svg><div class="a" style="left:4px;top:387px;width:11.5px;height:11.5px;background:#cf1d1d;"></div><div class="a" style="left:10px;top:392px;width:11.5px;height:11.5px;background:#f5f5f5;border:1px solid #222"></div><div class="a" style="left:12.5px;top:394.5px;width:6.5px;height:6.5px;background:none;border:1.2px solid #222"></div><svg class="a" style="left:10px;top:392px;" width="12" height="12" viewBox="0 0 12 12"><path d="M1 11L11 1" stroke="#e02020" stroke-width="1.5"/></svg><svg class="a" style="left:4px;top:406px;" width="9" height="10" viewBox="0 0 9 10"><rect x="1" y="1" width="7" height="8" rx="1" fill="#333" stroke="#aaa" stroke-width="0.8"/><rect x="3" y="3" width="3" height="4" fill="none" stroke="#aaa" stroke-width="0.6"/></svg><div class="t" style="left:15.00px;top:406.50px;color:#ccc;font:bold 9px 'Liberation Serif';">T</div><div class="a" style="left:4px;top:419px;width:17px;height:14px;background:#333;border-radius:2px"></div><div class="a" style="left:7px;top:421px;width:11px;height:10px;background:#f0f0f0;"></div><svg class="a" style="left:7px;top:421px;" width="11" height="10" viewBox="0 0 11 10"><path d="M0.5 9.5L10.5 0.5" stroke="#e02020" stroke-width="1.4"/></svg><svg class="a" style="left:5px;top:437px;" width="14" height="12" viewBox="0 0 14 12"><rect x="2" y="4" width="9" height="6" fill="none" stroke="#bbb"/><path d="M4 2h9v6" fill="none" stroke="#bbb" stroke-width="0.7"/></svg><div class="a" style="left:4px;top:452px;width:17px;height:15px;background:#333;border-radius:2px"></div><svg class="a" style="left:6px;top:454px;" width="13" height="11" viewBox="0 0 13 11"><rect x="2" y="1" width="9" height="9" fill="none" stroke="#bbb"/><rect x="4" y="3" width="5" height="5" fill="#888"/></svg><div class="a" style="left:26px;top:90.5px;width:671px;height:9.5px;background:#212121;"></div><div class="a" style="left:26px;top:90.5px;width:9px;height:468px;background:#212121;"></div><div class="a" style="left:26px;top:99.5px;width:9px;height:1px;background:#444;"></div><div class="a" style="left:35px;top:90.5px;width:1px;height:9px;background:#444;"></div><svg class="a" style="left:26px;top:91px;" width="671" height="9" viewBox="0 0 671 9"><path d="M20.9 0v9" stroke="#4a4a4a" stroke-width="0.9"/><path d="M36.1 5v4" stroke="#666" stroke-width="0.8"/><path d="M51.3 0v9" stroke="#4a4a4a" stroke-width="0.9"/><path d="M66.4 5v4" stroke="#666" stroke-width="0.8"/><path d="M81.6 0v9" stroke="#4a4a4a" stroke-width="0.9"/><path d="M96.8 5v4" stroke="#666" stroke-width="0.8"/><path d="M112.0 0v9" stroke="#4a4a4a" stroke-width="0.9"/><path d="M127.2 5v4" stroke="#666" stroke-width="0.8"/><path d="M142.4 0v9" stroke="#4a4a4a" stroke-width="0.9"/><path d="M157.6 5v4" stroke="#666" stroke-width="0.8"/><path d="M172.7 0v9" stroke="#4a4a4a" stroke-width="0.9"/><path d="M187.9 5v4" stroke="#666" stroke-width="0.8"/><path d="M203.1 0v9" stroke="#4a4a4a" stroke-width="0.9"/><path d="M218.3 5v4" stroke="#666" stroke-width="0.8"/><path d="M233.5 0v9" stroke="#4a4a4a" stroke-width="0.9"/><path d="M248.7 5v4" stroke="#666" stroke-width="0.8"/><path d="M263.9 0v9" stroke="#4a4a4a" stroke-width="0.9"/><path d="M279.0 5v4" stroke="#666" stroke-width="0.8"/><path d="M294.2 0v9" stroke="#4a4a4a" stroke-width="0.9"/><path d="M309.4 5v4" stroke="#666" stroke-width="0.8"/><path d="M324.6 0v9" stroke="#4a4a4a" stroke-width="0.9"/><path d="M339.8 5v4" stroke="#666" stroke-width="0.8"/><path d="M355.0 0v9" stroke="#4a4a4a" stroke-width="0.9"/><path d="M370.1 5v4" stroke="#666" stroke-width="0.8"/><path d="M385.3 0v9" stroke="#4a4a4a" stroke-width="0.9"/><path d="M400.5 5v4" stroke="#666" stroke-width="0.8"/><path d="M415.7 0v9" stroke="#4a4a4a" stroke-width="0.9"/><path d="M430.9 5v4" stroke="#666" stroke-width="0.8"/><path d="M446.1 0v9" stroke="#4a4a4a" stroke-width="0.9"/><path d="M461.3 5v4" stroke="#666" stroke-width="0.8"/><path d="M476.4 0v9" stroke="#4a4a4a" stroke-width="0.9"/><path d="M491.6 5v4" stroke="#666" stroke-width="0.8"/><path d="M506.8 0v9" stroke="#4a4a4a" stroke-width="0.9"/><path d="M522.0 5v4" stroke="#666" stroke-width="0.8"/><path d="M537.2 0v9" stroke="#4a4a4a" stroke-width="0.9"/><path d="M552.4 5v4" stroke="#666" stroke-width="0.8"/><path d="M567.5 0v9" stroke="#4a4a4a" stroke-width="0.9"/><path d="M582.7 5v4" stroke="#666" stroke-width="0.8"/><path d="M597.9 0v9" stroke="#4a4a4a" stroke-width="0.9"/><path d="M613.1 5v4" stroke="#666" stroke-width="0.8"/><path d="M628.3 0v9" stroke="#4a4a4a" stroke-width="0.9"/><path d="M643.5 5v4" stroke="#666" stroke-width="0.8"/><path d="M658.7 0v9" stroke="#4a4a4a" stroke-width="0.9"/><path d="M11.8 7.5v1.5" stroke="#5a5a5a" stroke-width="0.7"/><path d="M14.8 7.5v1.5" stroke="#5a5a5a" stroke-width="0.7"/><path d="M17.9 7.5v1.5" stroke="#5a5a5a" stroke-width="0.7"/><path d="M23.9 7.5v1.5" stroke="#5a5a5a" stroke-width="0.7"/><path d="M27.0 7.5v1.5" stroke="#5a5a5a" stroke-width="0.7"/><path d="M30.0 7.5v1.5" stroke="#5a5a5a" stroke-width="0.7"/><path d="M33.0 7.5v1.5" stroke="#5a5a5a" stroke-width="0.7"/><path d="M39.1 7.5v1.5" stroke="#5a5a5a" stroke-width="0.7"/><path d="M42.1 7.5v1.5" stroke="#5a5a5a" stroke-width="0.7"/><path d="M45.2 7.5v1.5" stroke="#5a5a5a" stroke-width="0.7"/><path d="M48.2 7.5v1.5" stroke="#5a5a5a" stroke-width="0.7"/><path d="M54.3 7.5v1.5" stroke="#5a5a5a" stroke-width="0.7"/><path d="M57.3 7.5v1.5" stroke="#5a5a5a" stroke-width="0.7"/><path d="M60.4 7.5v1.5" stroke="#5a5a5a" stroke-width="0.7"/><path d="M63.4 7.5v1.5" stroke="#5a5a5a" stroke-width="0.7"/><path d="M69.5 7.5v1.5" stroke="#5a5a5a" stroke-width="0.7"/><path d="M72.5 7.5v1.5" stroke="#5a5a5a" stroke-width="0.7"/><path d="M75.6 7.5v1.5" stroke="#5a5a5a" stroke-width="0.7"/><path d="M78.6 7.5v1.5" stroke="#5a5a5a" stroke-width="0.7"/><path d="M84.7 7.5v1.5" stroke="#5a5a5a" stroke-width="0.7"/><path d="M87.7 7.5v1.5" stroke="#5a5a5a" stroke-width="0.7"/><path d="M90.7 7.5v1.5" stroke="#5a5a5a" stroke-width="0.7"/><path d="M93.8 7.5v1.5" stroke="#5a5a5a" stroke-width="0.7"/><path d="M99.9 7.5v1.5" stroke="#5a5a5a" stroke-width="0.7"/><path d="M102.9 7.5v1.5" stroke="#5a5a5a" stroke-width="0.7"/><path d="M105.9 7.5v1.5" stroke="#5a5a5a" stroke-width="0.7"/><path d="M109.0 7.5v1.5" stroke="#5a5a5a" stroke-width="0.7"/><path d="M115.0 7.5v1.5" stroke="#5a5a5a" stroke-width="0.7"/><path d="M118.1 7.5v1.5" stroke="#5a5a5a" stroke-width="0.7"/><path d="M121.1 7.5v1.5" stroke="#5a5a5a" stroke-width="0.7"/><path d="M124.1 7.5v1.5" stroke="#5a5a5a" stroke-width="0.7"/><path d="M130.2 7.5v1.5" stroke="#5a5a5a" stroke-width="0.7"/><path d="M133.3 7.5v1.5" stroke="#5a5a5a" stroke-width="0.7"/><path d="M136.3 7.5v1.5" stroke="#5a5a5a" stroke-width="0.7"/><path d="M139.3 7.5v1.5" stroke="#5a5a5a" stroke-width="0.7"/><path d="M145.4 7.5v1.5" stroke="#5a5a5a" stroke-width="0.7"/><path d="M148.4 7.5v1.5" stroke="#5a5a5a" stroke-width="0.7"/><path d="M151.5 7.5v1.5" stroke="#5a5a5a" stroke-width="0.7"/><path d="M154.5 7.5v1.5" stroke="#5a5a5a" stroke-width="0.7"/><path d="M160.6 7.5v1.5" stroke="#5a5a5a" stroke-width="0.7"/><path d="M163.6 7.5v1.5" stroke="#5a5a5a" stroke-width="0.7"/><path d="M166.7 7.5v1.5" stroke="#5a5a5a" stroke-width="0.7"/><path d="M169.7 7.5v1.5" stroke="#5a5a5a" stroke-width="0.7"/><path d="M175.8 7.5v1.5" stroke="#5a5a5a" stroke-width="0.7"/><path d="M178.8 7.5v1.5" stroke="#5a5a5a" stroke-width="0.7"/><path d="M181.9 7.5v1.5" stroke="#5a5a5a" stroke-width="0.7"/><path d="M184.9 7.5v1.5" stroke="#5a5a5a" stroke-width="0.7"/><path d="M191.0 7.5v1.5" stroke="#5a5a5a" stroke-width="0.7"/><path d="M194.0 7.5v1.5" stroke="#5a5a5a" stroke-width="0.7"/><path d="M197.0 7.5v1.5" stroke="#5a5a5a" stroke-width="0.7"/><path d="M200.1 7.5v1.5" stroke="#5a5a5a" stroke-width="0.7"/><path d="M206.1 7.5v1.5" stroke="#5a5a5a" stroke-width="0.7"/><path d="M209.2 7.5v1.5" stroke="#5a5a5a" stroke-width="0.7"/><path d="M212.2 7.5v1.5" stroke="#5a5a5a" stroke-width="0.7"/><path d="M215.3 7.5v1.5" stroke="#5a5a5a" stroke-width="0.7"/><path d="M221.3 7.5v1.5" stroke="#5a5a5a" stroke-width="0.7"/><path d="M224.4 7.5v1.5" stroke="#5a5a5a" stroke-width="0.7"/><path d="M227.4 7.5v1.5" stroke="#5a5a5a" stroke-width="0.7"/><path d="M230.4 7.5v1.5" stroke="#5a5a5a" stroke-width="0.7"/><path d="M236.5 7.5v1.5" stroke="#5a5a5a" stroke-width="0.7"/><path d="M239.6 7.5v1.5" stroke="#5a5a5a" stroke-width="0.7"/><path d="M242.6 7.5v1.5" stroke="#5a5a5a" stroke-width="0.7"/><path d="M245.6 7.5v1.5" stroke="#5a5a5a" stroke-width="0.7"/><path d="M251.7 7.5v1.5" stroke="#5a5a5a" stroke-width="0.7"/><path d="M254.7 7.5v1.5" stroke="#5a5a5a" stroke-width="0.7"/><path d="M257.8 7.5v1.5" stroke="#5a5a5a" stroke-width="0.7"/><path d="M260.8 7.5v1.5" stroke="#5a5a5a" stroke-width="0.7"/><path d="M266.9 7.5v1.5" stroke="#5a5a5a" stroke-width="0.7"/><path d="M269.9 7.5v1.5" stroke="#5a5a5a" stroke-width="0.7"/><path d="M273.0 7.5v1.5" stroke="#5a5a5a" stroke-width="0.7"/><path d="M276.0 7.5v1.5" stroke="#5a5a5a" stroke-width="0.7"/><path d="M282.1 7.5v1.5" stroke="#5a5a5a" stroke-width="0.7"/><path d="M285.1 7.5v1.5" stroke="#5a5a5a" stroke-width="0.7"/><path d="M288.1 7.5v1.5" stroke="#5a5a5a" stroke-width="0.7"/><path d="M291.2 7.5v1.5" stroke="#5a5a5a" stroke-width="0.7"/><path d="M297.3 7.5v1.5" stroke="#5a5a5a" stroke-width="0.7"/><path d="M300.3 7.5v1.5" stroke="#5a5a5a" stroke-width="0.7"/><path d="M303.3 7.5v1.5" stroke="#5a5a5a" stroke-width="0.7"/><path d="M306.4 7.5v1.5" stroke="#5a5a5a" stroke-width="0.7"/><path d="M312.4 7.5v1.5" stroke="#5a5a5a" stroke-width="0.7"/><path d="M315.5 7.5v1.5" stroke="#5a5a5a" stroke-width="0.7"/><path d="M318.5 7.5v1.5" stroke="#5a5a5a" stroke-width="0.7"/><path d="M321.6 7.5v1.5" stroke="#5a5a5a" stroke-width="0.7"/><path d="M327.6 7.5v1.5" stroke="#5a5a5a" stroke-width="0.7"/><path d="M330.7 7.5v1.5" stroke="#5a5a5a" stroke-width="0.7"/><path d="M333.7 7.5v1.5" stroke="#5a5a5a" stroke-width="0.7"/><path d="M336.7 7.5v1.5" stroke="#5a5a5a" stroke-width="0.7"/><path d="M342.8 7.5v1.5" stroke="#5a5a5a" stroke-width="0.7"/><path d="M345.8 7.5v1.5" stroke="#5a5a5a" stroke-width="0.7"/><path d="M348.9 7.5v1.5" stroke="#5a5a5a" stroke-width="0.7"/><path d="M351.9 7.5v1.5" stroke="#5a5a5a" stroke-width="0.7"/><path d="M358.0 7.5v1.5" stroke="#5a5a5a" stroke-width="0.7"/><path d="M361.0 7.5v1.5" stroke="#5a5a5a" stroke-width="0.7"/><path d="M364.1 7.5v1.5" stroke="#5a5a5a" stroke-width="0.7"/><path d="M367.1 7.5v1.5" stroke="#5a5a5a" stroke-width="0.7"/><path d="M373.2 7.5v1.5" stroke="#5a5a5a" stroke-width="0.7"/><path d="M376.2 7.5v1.5" stroke="#5a5a5a" stroke-width="0.7"/><path d="M379.3 7.5v1.5" stroke="#5a5a5a" stroke-width="0.7"/><path d="M382.3 7.5v1.5" stroke="#5a5a5a" stroke-width="0.7"/><path d="M388.4 7.5v1.5" stroke="#5a5a5a" stroke-width="0.7"/><path d="M391.4 7.5v1.5" stroke="#5a5a5a" stroke-width="0.7"/><path d="M394.4 7.5v1.5" stroke="#5a5a5a" stroke-width="0.7"/><path d="M397.5 7.5v1.5" stroke="#5a5a5a" stroke-width="0.7"/><path d="M403.6 7.5v1.5" stroke="#5a5a5a" stroke-width="0.7"/><path d="M406.6 7.5v1.5" stroke="#5a5a5a" stroke-width="0.7"/><path d="M409.6 7.5v1.5" stroke="#5a5a5a" stroke-width="0.7"/><path d="M412.7 7.5v1.5" stroke="#5a5a5a" stroke-width="0.7"/><path d="M418.7 7.5v1.5" stroke="#5a5a5a" stroke-width="0.7"/><path d="M421.8 7.5v1.5" stroke="#5a5a5a" stroke-width="0.7"/><path d="M424.8 7.5v1.5" stroke="#5a5a5a" stroke-width="0.7"/><path d="M427.8 7.5v1.5" stroke="#5a5a5a" stroke-width="0.7"/><path d="M433.9 7.5v1.5" stroke="#5a5a5a" stroke-width="0.7"/><path d="M437.0 7.5v1.5" stroke="#5a5a5a" stroke-width="0.7"/><path d="M440.0 7.5v1.5" stroke="#5a5a5a" stroke-width="0.7"/><path d="M443.0 7.5v1.5" stroke="#5a5a5a" stroke-width="0.7"/><path d="M449.1 7.5v1.5" stroke="#5a5a5a" stroke-width="0.7"/><path d="M452.1 7.5v1.5" stroke="#5a5a5a" stroke-width="0.7"/><path d="M455.2 7.5v1.5" stroke="#5a5a5a" stroke-width="0.7"/><path d="M458.2 7.5v1.5" stroke="#5a5a5a" stroke-width="0.7"/><path d="M464.3 7.5v1.5" stroke="#5a5a5a" stroke-width="0.7"/><path d="M467.3 7.5v1.5" stroke="#5a5a5a" stroke-width="0.7"/><path d="M470.4 7.5v1.5" stroke="#5a5a5a" stroke-width="0.7"/><path d="M473.4 7.5v1.5" stroke="#5a5a5a" stroke-width="0.7"/><path d="M479.5 7.5v1.5" stroke="#5a5a5a" stroke-width="0.7"/><path d="M482.5 7.5v1.5" stroke="#5a5a5a" stroke-width="0.7"/><path d="M485.6 7.5v1.5" stroke="#5a5a5a" stroke-width="0.7"/><path d="M488.6 7.5v1.5" stroke="#5a5a5a" stroke-width="0.7"/><path d="M494.7 7.5v1.5" stroke="#5a5a5a" stroke-width="0.7"/><path d="M497.7 7.5v1.5" stroke="#5a5a5a" stroke-width="0.7"/><path d="M500.7 7.5v1.5" stroke="#5a5a5a" stroke-width="0.7"/><path d="M503.8 7.5v1.5" stroke="#5a5a5a" stroke-width="0.7"/><path d="M509.8 7.5v1.5" stroke="#5a5a5a" stroke-width="0.7"/><path d="M512.9 7.5v1.5" stroke="#5a5a5a" stroke-width="0.7"/><path d="M515.9 7.5v1.5" stroke="#5a5a5a" stroke-width="0.7"/><path d="M519.0 7.5v1.5" stroke="#5a5a5a" stroke-width="0.7"/><path d="M525.0 7.5v1.5" stroke="#5a5a5a" stroke-width="0.7"/><path d="M528.1 7.5v1.5" stroke="#5a5a5a" stroke-width="0.7"/><path d="M531.1 7.5v1.5" stroke="#5a5a5a" stroke-width="0.7"/><path d="M534.1 7.5v1.5" stroke="#5a5a5a" stroke-width="0.7"/><path d="M540.2 7.5v1.5" stroke="#5a5a5a" stroke-width="0.7"/><path d="M543.3 7.5v1.5" stroke="#5a5a5a" stroke-width="0.7"/><path d="M546.3 7.5v1.5" stroke="#5a5a5a" stroke-width="0.7"/><path d="M549.3 7.5v1.5" stroke="#5a5a5a" stroke-width="0.7"/><path d="M555.4 7.5v1.5" stroke="#5a5a5a" stroke-width="0.7"/><path d="M558.4 7.5v1.5" stroke="#5a5a5a" stroke-width="0.7"/><path d="M561.5 7.5v1.5" stroke="#5a5a5a" stroke-width="0.7"/><path d="M564.5 7.5v1.5" stroke="#5a5a5a" stroke-width="0.7"/><path d="M570.6 7.5v1.5" stroke="#5a5a5a" stroke-width="0.7"/><path d="M573.6 7.5v1.5" stroke="#5a5a5a" stroke-width="0.7"/><path d="M576.7 7.5v1.5" stroke="#5a5a5a" stroke-width="0.7"/><path d="M579.7 7.5v1.5" stroke="#5a5a5a" stroke-width="0.7"/><path d="M585.8 7.5v1.5" stroke="#5a5a5a" stroke-width="0.7"/><path d="M588.8 7.5v1.5" stroke="#5a5a5a" stroke-width="0.7"/><path d="M591.8 7.5v1.5" stroke="#5a5a5a" stroke-width="0.7"/><path d="M594.9 7.5v1.5" stroke="#5a5a5a" stroke-width="0.7"/><path d="M601.0 7.5v1.5" stroke="#5a5a5a" stroke-width="0.7"/><path d="M604.0 7.5v1.5" stroke="#5a5a5a" stroke-width="0.7"/><path d="M607.0 7.5v1.5" stroke="#5a5a5a" stroke-width="0.7"/><path d="M610.1 7.5v1.5" stroke="#5a5a5a" stroke-width="0.7"/><path d="M616.1 7.5v1.5" stroke="#5a5a5a" stroke-width="0.7"/><path d="M619.2 7.5v1.5" stroke="#5a5a5a" stroke-width="0.7"/><path d="M622.2 7.5v1.5" stroke="#5a5a5a" stroke-width="0.7"/><path d="M625.3 7.5v1.5" stroke="#5a5a5a" stroke-width="0.7"/><path d="M631.3 7.5v1.5" stroke="#5a5a5a" stroke-width="0.7"/><path d="M634.4 7.5v1.5" stroke="#5a5a5a" stroke-width="0.7"/><path d="M637.4 7.5v1.5" stroke="#5a5a5a" stroke-width="0.7"/><path d="M640.4 7.5v1.5" stroke="#5a5a5a" stroke-width="0.7"/><path d="M646.5 7.5v1.5" stroke="#5a5a5a" stroke-width="0.7"/><path d="M649.5 7.5v1.5" stroke="#5a5a5a" stroke-width="0.7"/><path d="M652.6 7.5v1.5" stroke="#5a5a5a" stroke-width="0.7"/><path d="M655.6 7.5v1.5" stroke="#5a5a5a" stroke-width="0.7"/><path d="M661.7 7.5v1.5" stroke="#5a5a5a" stroke-width="0.7"/><path d="M664.7 7.5v1.5" stroke="#5a5a5a" stroke-width="0.7"/><path d="M667.8 7.5v1.5" stroke="#5a5a5a" stroke-width="0.7"/></svg><div class="t" style="left:48.39px;top:90.30px;color:#e8e8e8;font:8px 'Liberation Sans';">60</div><div class="t" style="left:78.76px;top:90.30px;color:#e8e8e8;font:8px 'Liberation Sans';">40</div><div class="t" style="left:109.13px;top:90.30px;color:#e8e8e8;font:8px 'Liberation Sans';">20</div><div class="t" style="left:139.50px;top:90.30px;color:#e8e8e8;font:8px 'Liberation Sans';">0</div><div class="t" style="left:169.87px;top:90.30px;color:#e8e8e8;font:8px 'Liberation Sans';">20</div><div class="t" style="left:200.24px;top:90.30px;color:#e8e8e8;font:8px 'Liberation Sans';">40</div><div class="t" style="left:230.61px;top:90.30px;color:#e8e8e8;font:8px 'Liberation Sans';">60</div><div class="t" style="left:260.98px;top:90.30px;color:#e8e8e8;font:8px 'Liberation Sans';">80</div><div class="t" style="left:290.35px;top:90.30px;color:#e8e8e8;font:8px 'Liberation Sans';">100</div><div class="t" style="left:320.72px;top:90.30px;color:#e8e8e8;font:8px 'Liberation Sans';">120</div><div class="t" style="left:351.09px;top:90.30px;color:#e8e8e8;font:8px 'Liberation Sans';">140</div><div class="t" style="left:381.46px;top:90.30px;color:#e8e8e8;font:8px 'Liberation Sans';">160</div><div class="t" style="left:411.83px;top:90.30px;color:#e8e8e8;font:8px 'Liberation Sans';">180</div><div class="t" style="left:443.20px;top:90.30px;color:#e8e8e8;font:8px 'Liberation Sans';">200</div><div class="t" style="left:473.57px;top:90.30px;color:#e8e8e8;font:8px 'Liberation Sans';">220</div><div class="t" style="left:503.94px;top:90.30px;color:#e8e8e8;font:8px 'Liberation Sans';">240</div><div class="t" style="left:534.31px;top:90.30px;color:#e8e8e8;font:8px 'Liberation Sans';">260</div><div class="t" style="left:564.68px;top:90.30px;color:#e8e8e8;font:8px 'Liberation Sans';">280</div><div class="t" style="left:594.05px;top:90.30px;color:#e8e8e8;font:8px 'Liberation Sans';">300</div><div class="t" style="left:624.42px;top:90.30px;color:#e8e8e8;font:8px 'Liberation Sans';">320</div><div class="t" style="left:654.79px;top:90.30px;color:#e8e8e8;font:8px 'Liberation Sans';">340</div><div class="t" style="left:685.16px;top:90.30px;color:#e8e8e8;font:8px 'Liberation Sans';">360</div><svg class="a" style="left:26px;top:90px;" width="9" height="468" viewBox="0 0 9 468"><path d="M0 17.6h9" stroke="#4a4a4a" stroke-width="0.9"/><path d="M6.5 32.8h2.5" stroke="#777" stroke-width="0.8"/><path d="M0 48.0h9" stroke="#4a4a4a" stroke-width="0.9"/><path d="M6.5 63.2h2.5" stroke="#777" stroke-width="0.8"/><path d="M0 78.4h9" stroke="#4a4a4a" stroke-width="0.9"/><path d="M6.5 93.6h2.5" stroke="#777" stroke-width="0.8"/><path d="M0 108.7h9" stroke="#4a4a4a" stroke-width="0.9"/><path d="M6.5 123.9h2.5" stroke="#777" stroke-width="0.8"/><path d="M0 139.1h9" stroke="#4a4a4a" stroke-width="0.9"/><path d="M6.5 154.3h2.5" stroke="#777" stroke-width="0.8"/><path d="M0 169.5h9" stroke="#4a4a4a" stroke-width="0.9"/><path d="M6.5 184.7h2.5" stroke="#777" stroke-width="0.8"/><path d="M0 199.9h9" stroke="#4a4a4a" stroke-width="0.9"/><path d="M6.5 215.0h2.5" stroke="#777" stroke-width="0.8"/><path d="M0 230.2h9" stroke="#4a4a4a" stroke-width="0.9"/><path d="M6.5 245.4h2.5" stroke="#777" stroke-width="0.8"/><path d="M0 260.6h9" stroke="#4a4a4a" stroke-width="0.9"/><path d="M6.5 275.8h2.5" stroke="#777" stroke-width="0.8"/><path d="M0 291.0h9" stroke="#4a4a4a" stroke-width="0.9"/><path d="M6.5 306.1h2.5" stroke="#777" stroke-width="0.8"/><path d="M0 321.3h9" stroke="#4a4a4a" stroke-width="0.9"/><path d="M6.5 336.5h2.5" stroke="#777" stroke-width="0.8"/><path d="M0 351.7h9" stroke="#4a4a4a" stroke-width="0.9"/><path d="M6.5 366.9h2.5" stroke="#777" stroke-width="0.8"/><path d="M0 382.1h9" stroke="#4a4a4a" stroke-width="0.9"/><path d="M6.5 397.3h2.5" stroke="#777" stroke-width="0.8"/><path d="M0 412.4h9" stroke="#4a4a4a" stroke-width="0.9"/><path d="M6.5 427.6h2.5" stroke="#777" stroke-width="0.8"/><path d="M0 442.8h9" stroke="#4a4a4a" stroke-width="0.9"/><path d="M6.5 458.0h2.5" stroke="#777" stroke-width="0.8"/></svg><div class="t" style="left:27.70px;top:108.73px;color:#d0d0d0;font:7px 'Liberation Sans';">2</div><div class="t" style="left:27.70px;top:114.73px;color:#d0d0d0;font:7px 'Liberation Sans';">0</div><div class="t" style="left:27.70px;top:139.10px;color:#d0d0d0;font:7px 'Liberation Sans';">0</div><div class="t" style="left:27.70px;top:169.47px;color:#d0d0d0;font:7px 'Liberation Sans';">2</div><div class="t" style="left:27.70px;top:175.47px;color:#d0d0d0;font:7px 'Liberation Sans';">0</div><div class="t" style="left:27.70px;top:199.84px;color:#d0d0d0;font:7px 'Liberation Sans';">4</div><div class="t" style="left:27.70px;top:205.84px;color:#d0d0d0;font:7px 'Liberation Sans';">0</div><div class="t" style="left:27.70px;top:230.21px;color:#d0d0d0;font:7px 'Liberation Sans';">6</div><div class="t" style="left:27.70px;top:236.21px;color:#d0d0d0;font:7px 'Liberation Sans';">0</div><div class="t" style="left:27.70px;top:260.58px;color:#d0d0d0;font:7px 'Liberation Sans';">8</div><div class="t" style="left:27.70px;top:266.58px;color:#d0d0d0;font:7px 'Liberation Sans';">0</div><div class="t" style="left:26.70px;top:290.95px;color:#d0d0d0;font:7px 'Liberation Sans';">1</div><div class="t" style="left:27.70px;top:296.95px;color:#d0d0d0;font:7px 'Liberation Sans';">0</div><div class="t" style="left:27.70px;top:302.95px;color:#d0d0d0;font:7px 'Liberation Sans';">0</div><div class="t" style="left:26.70px;top:321.32px;color:#d0d0d0;font:7px 'Liberation Sans';">1</div><div class="t" style="left:27.70px;top:327.32px;color:#d0d0d0;font:7px 'Liberation Sans';">2</div><div class="t" style="left:27.70px;top:333.32px;color:#d0d0d0;font:7px 'Liberation Sans';">0</div><div class="t" style="left:26.70px;top:351.69px;color:#d0d0d0;font:7px 'Liberation Sans';">1</div><div class="t" style="left:27.70px;top:357.69px;color:#d0d0d0;font:7px 'Liberation Sans';">4</div><div class="t" style="left:27.70px;top:363.69px;color:#d0d0d0;font:7px 'Liberation Sans';">0</div><div class="t" style="left:26.70px;top:382.06px;color:#d0d0d0;font:7px 'Liberation Sans';">1</div><div class="t" style="left:27.70px;top:388.06px;color:#d0d0d0;font:7px 'Liberation Sans';">6</div><div class="t" style="left:27.70px;top:394.06px;color:#d0d0d0;font:7px 'Liberation Sans';">0</div><div class="t" style="left:26.70px;top:412.43px;color:#d0d0d0;font:7px 'Liberation Sans';">1</div><div class="t" style="left:27.70px;top:418.43px;color:#d0d0d0;font:7px 'Liberation Sans';">8</div><div class="t" style="left:27.70px;top:424.43px;color:#d0d0d0;font:7px 'Liberation Sans';">0</div><div class="t" style="left:27.70px;top:442.80px;color:#d0d0d0;font:7px 'Liberation Sans';">2</div><div class="t" style="left:27.70px;top:448.80px;color:#d0d0d0;font:7px 'Liberation Sans';">0</div><div class="t" style="left:27.70px;top:454.80px;color:#d0d0d0;font:7px 'Liberation Sans';">0</div><div class="t" style="left:27.70px;top:473.17px;color:#d0d0d0;font:7px 'Liberation Sans';">2</div><div class="t" style="left:27.70px;top:479.17px;color:#d0d0d0;font:7px 'Liberation Sans';">2</div><div class="t" style="left:27.70px;top:485.17px;color:#d0d0d0;font:7px 'Liberation Sans';">0</div><div class="t" style="left:27.70px;top:503.54px;color:#d0d0d0;font:7px 'Liberation Sans';">2</div><div class="t" style="left:27.70px;top:509.54px;color:#d0d0d0;font:7px 'Liberation Sans';">4</div><div class="t" style="left:27.70px;top:515.54px;color:#d0d0d0;font:7px 'Liberation Sans';">0</div><div class="t" style="left:27.70px;top:533.91px;color:#d0d0d0;font:7px 'Liberation Sans';">2</div><div class="t" style="left:27.70px;top:539.91px;color:#d0d0d0;font:7px 'Liberation Sans';">6</div><div class="t" style="left:27.70px;top:545.91px;color:#d0d0d0;font:7px 'Liberation Sans';">0</div><div class="a" style="left:35px;top:100px;width:662px;height:458px;background:#5b5b5b;"></div><div class="a" style="left:26px;top:558px;width:671px;height:19px;background:#565656;"></div><div class="a" style="left:26px;top:558px;width:671px;height:1px;background:#4f4f4f;"></div><div class="a" style="left:697px;top:90px;width:10px;height:487px;background:#474747;"></div><div class="a" style="left:697.8px;top:198.4px;width:8px;height:92px;background:#676767;border-radius:4px"></div><svg class="a" style="left:698px;top:91px;" width="9" height="7" viewBox="0 0 9 7"><path d="M1.5 5l3-3 3 3" fill="none" stroke="#999" stroke-width="0.9"/></svg><svg class="a" style="left:698px;top:571px;" width="9" height="7" viewBox="0 0 9 7"><path d="M1.5 2l3 3 3-3" fill="none" stroke="#999" stroke-width="0.9"/></svg><div class="a" style="left:706px;top:73px;width:2px;height:516px;background:#333;"></div><div class="a" style="left:130px;top:130px;width:509.5px;height:390px;border:1px solid rgba(110,170,230,0.35)"></div><div class="a" style="left:139px;top:512px;width:1px;height:27px;background:rgba(110,170,230,0.35);"></div><div class="a" style="left:139px;top:539px;width:492px;height:1px;background:rgba(110,170,230,0.35);"></div><div class="a" style="left:631px;top:512px;width:1px;height:28px;background:rgba(110,170,230,0.35);"></div><div class="a" style="left:140px;top:140px;width:492px;height:374px;background:#262626;"></div><div class="a" style="left:138px;top:138px;width:492px;height:374px;background:#fff;"></div><div class="a" style="left:384px;top:138px;width:1px;height:374px;background:#a8a8a8;"></div><div class="a" style="left:138px;top:143px;width:492px;height:1px;background:rgba(50,135,235,0.5);"></div><div class="a" style="left:134px;top:165px;width:499px;height:1px;background:rgba(50,135,235,0.5);"></div><div class="a" style="left:138px;top:184px;width:495px;height:1px;background:rgba(50,135,235,0.5);"></div><div class="a" style="left:137px;top:195px;width:493px;height:1px;background:rgba(50,135,235,0.5);"></div><div class="a" style="left:137px;top:222px;width:493px;height:1px;background:rgba(50,135,235,0.5);"></div><div class="a" style="left:137px;top:251px;width:492px;height:1px;background:rgba(50,135,235,0.5);"></div><div class="a" style="left:137px;top:273px;width:492px;height:1px;background:rgba(50,135,235,0.5);"></div><div class="a" style="left:138px;top:310px;width:492px;height:1px;background:rgba(50,135,235,0.5);"></div><div class="a" style="left:138px;top:336px;width:492px;height:1px;background:rgba(50,135,235,0.5);"></div><div class="a" style="left:138px;top:369px;width:491px;height:1px;background:rgba(50,135,235,0.5);"></div><div class="a" style="left:138px;top:398px;width:491px;height:1px;background:rgba(50,135,235,0.5);"></div><div class="a" style="left:140px;top:424px;width:488px;height:1px;background:rgba(50,135,235,0.5);"></div><div class="a" style="left:140px;top:450px;width:488px;height:1px;background:rgba(50,135,235,0.5);"></div><div class="a" style="left:139px;top:479px;width:494px;height:1px;background:rgba(50,135,235,0.5);"></div><div class="a" style="left:134px;top:493px;width:499px;height:1px;background:rgba(50,135,235,0.5);"></div><div class="a" style="left:134px;top:165px;width:1px;height:328px;background:rgba(50,135,235,0.5);"></div><div class="a" style="left:633px;top:165px;width:1px;height:328px;background:rgba(50,135,235,0.5);"></div><div class="a" style="left:137px;top:251px;width:1px;height:22px;background:rgba(50,135,235,0.5);"></div><div class="a" style="left:629px;top:369px;width:1px;height:29px;background:rgba(50,135,235,0.5);"></div><div class="a" style="left:140px;top:424px;width:1px;height:26px;background:rgba(50,135,235,0.5);"></div><div class="a" style="left:628px;top:424px;width:1px;height:26px;background:rgba(50,135,235,0.5);"></div><div class="a" style="left:139px;top:479px;width:1px;height:33px;background:rgba(50,135,235,0.5);"></div><div class="a" style="left:138px;top:317px;width:492px;height:2px;background:#cdf3ff;"></div><div class="hl" style="left:133.93px;top:159.73px;color:#0a0a0a;transform:scale(1.0711,1.0455)">CHOOSING</div>
<div class="hl" style="left:328.93px;top:159.73px;color:#cc1c24;transform:scale(1.0714,1.0455)">A</div>
<div class="hl" style="left:375.70px;top:159.73px;color:#0a0a0a;transform:scale(0.9325,1.0455)">TYPEFACE</div>
<div class="hl" style="left:545.37px;top:159.73px;color:#cc1c24;transform:scale(1.0145,1.0455)">NEED</div>
<div class="bd" style="left:320.2px;top:180.0px"></div>
<div class="bd" style="left:359.0px;top:180.0px"></div>
<div class="bd" style="left:535.4px;top:180.0px"></div>
<div class="hl" style="left:134.78px;top:217.92px;color:#cc1c24;transform:scale(1.1111,1.0136)">NOT</div>
<div class="hl" style="left:227.02px;top:217.92px;color:#0a0a0a;transform:scale(0.8900,1.0136)">BE</div>
<div class="hl" style="left:281.87px;top:217.92px;color:#0a0a0a;transform:scale(1.1310,1.0136)">AN</div>
<div class="hl" style="left:348.71px;top:217.92px;color:#0a0a0a;transform:scale(0.9889,1.0136)">ARBITRARY</div>
<div class="hl" style="left:545.96px;top:217.92px;color:#cc1c24;transform:scale(1.0185,1.0136)">DECI-</div>
<div class="bd" style="left:216.4px;top:237.6px"></div>
<div class="bd" style="left:272.4px;top:237.6px"></div>
<div class="bd" style="left:339.4px;top:237.6px"></div>
<div class="bd" style="left:535.4px;top:237.6px"></div>
<div class="hl" style="left:134.85px;top:275.50px;color:#cc1c24;transform:scale(1.0531,1.0000)">SION.</div>
<div class="hl" style="left:232.48px;top:275.50px;color:#0a0a0a;transform:scale(1.0176,1.0000)">SUITABILITY</div>
<div class="hl" style="left:435.87px;top:275.50px;color:#0a0a0a;transform:scale(1.0268,1.0000)">OF</div>
<div class="hl" style="left:490.70px;top:275.50px;color:#0a0a0a;transform:scale(0.9750,1.0000)">TYPE</div>
<div class="hl" style="left:578.98px;top:275.50px;color:#0a0a0a;transform:scale(1.0120,1.0000)">DE-</div>
<div class="bd" style="left:225.9px;top:294.9px"></div>
<div class="bd" style="left:429.0px;top:294.9px"></div>
<div class="bd" style="left:483.7px;top:294.9px"></div>
<div class="bd" style="left:573.1px;top:294.9px"></div>
<div class="hl" style="left:134.88px;top:333.08px;color:#0a0a0a;transform:scale(1.0151,0.9864)">SIGN</div>
<div class="hl" style="left:221.70px;top:333.08px;color:#0a0a0a;transform:scale(1.0738,0.9864)">TO</div>
<div class="hl" style="left:278.60px;top:333.08px;color:#0a0a0a;transform:scale(1.0541,0.9864)">THE</div>
<div class="hl" style="left:354.07px;top:333.08px;color:#0a0a0a;transform:scale(0.9333,0.9864)">SUBJECT</div>
<div class="hl" style="left:501.93px;top:333.08px;color:#0a0a0a;transform:scale(1.0683,0.9864)">OF</div>
<div class="hl" style="left:570.00px;top:333.08px;color:#0a0a0a;transform:scale(1.0098,0.9864)">THE</div>
<div class="bd" style="left:214.7px;top:352.2px"></div>
<div class="bd" style="left:272.9px;top:352.2px"></div>
<div class="bd" style="left:347.4px;top:352.2px"></div>
<div class="bd" style="left:494.6px;top:352.2px"></div>
<div class="bd" style="left:551.2px;top:352.2px"></div>
<div class="bd" style="left:562.2px;top:352.2px"></div>
<div class="hl" style="left:134.92px;top:391.14px;color:#0a0a0a;transform:scale(1.0411,0.9773)">BOOK</div>
<div class="hl" style="left:234.37px;top:391.14px;color:#0a0a0a;transform:scale(0.9154,0.9773)">IS</div>
<div class="hl" style="left:263.21px;top:391.14px;color:#0a0a0a;transform:scale(0.8936,0.9773)">LESS</div>
<div class="hl" style="left:339.42px;top:391.14px;color:#0a0a0a;transform:scale(1.0417,0.9773)">IMPORTANT</div>
<div class="hl" style="left:541.30px;top:391.14px;color:#0a0a0a;transform:scale(1.0583,0.9773)">THAN</div>
<div class="bd" style="left:231.1px;top:410.0px"></div>
<div class="bd" style="left:260.9px;top:410.0px"></div>
<div class="bd" style="left:334.9px;top:410.0px"></div>
<div class="bd" style="left:337.9px;top:410.0px"></div>
<div class="bd" style="left:531.4px;top:410.0px"></div>
<div class="bd" style="left:535.4px;top:410.0px"></div>
<div class="hl" style="left:147.30px;top:448.05px;color:#0a0a0a;transform:scale(1.1071,0.9909)">TO</div>
<div class="hl" style="left:210.20px;top:448.05px;color:#0a0a0a;transform:scale(1.0295,0.9909)">THE</div>
<div class="hl" style="left:281.99px;top:448.05px;color:#cc1c24;transform:scale(1.0056,0.9909)">NATURE</div>
<div class="hl" style="left:423.96px;top:448.05px;color:#cc1c24;transform:scale(1.0366,0.9909)">OF</div>
<div class="hl" style="left:477.85px;top:448.05px;color:#0a0a0a;transform:scale(0.9733,0.9909)">ITS</div>
<div class="hl" style="left:531.80px;top:448.05px;color:#0a0a0a;transform:scale(1.0342,0.9909)">TEXT</div>
<div class="bd" style="left:197.7px;top:467.2px"></div>
<div class="bd" style="left:205.4px;top:467.2px"></div>
<div class="bd" style="left:277.0px;top:467.2px"></div>
<div class="bd" style="left:418.0px;top:467.2px"></div>
<div class="bd" style="left:471.4px;top:467.2px"></div>
<div class="bd" style="left:527.4px;top:467.2px"></div>
<div class="bt" style="left:141.35px;top:142.50px;transform:scaleX(0.9483)">Text<b class="d">·</b>that<b class="d">·</b>contains<b class="d">·</b>many<b class="d">·</b>dates,<b class="d">·</b>dimensions<b class="d">·</b>or<b class="d">·</b>formulae<b class="d">·</b>needs<b class="d">·</b>a<b class="d">·</b>face<b class="d">·</b>with<b class="d">·</b>good<b class="d">·</b>numerals,<b class="d">·</b>fractions<b class="d">·</b>and<b class="d">·</b>matching<b class="d">·</b>mathematical<b class="d">·</b>sorts,<b class="d">·</b>e.g.<b class="d">·</b>Modern</div>
<div class="bt" style="left:155.80px;top:154.60px;transform:scaleX(0.9584)">A<b class="d">·</b>type<b class="d">·</b>that<b class="d">·</b>has<b class="d">·</b>alternative<b class="d">·</b>non-lining<b class="d">·</b>numerals<b class="d">·</b>will<b class="d">·</b>be<b class="d">·</b>particularly<b class="d">·</b>useful<b class="d">·</b>here,<b class="d">·</b>as<b class="d">·</b>might<b class="d">·</b>numerals<b class="d">·</b>smaller<b class="d">·</b>than<b class="d">·</b>the<b class="d">·</b>capitals,<b class="d">·</b>e<b class="d">·</b>.<b class="d">·</b>g.<b class="d">·</b>Bell.</div>
<div class="bt" style="left:136.83px;top:194.40px;transform:scaleX(0.9655)">Numerous<b class="d">·</b>quotations,<b class="d">·</b>especially<b class="d">·</b>of<b class="d">·</b>poetry,<b class="d">·</b>and<b class="d">·</b>titles<b class="d">·</b>of<b class="d">·</b>pictures<b class="d">·</b>or<b class="d">·</b>publications<b class="d">·</b>might<b class="d">·</b>suggest<b class="d">·</b>a<b class="d">·</b>face<b class="d">·</b>with<b class="d">·</b>a<b class="d">·</b>distinguished<b class="d">·</b>italic,<b class="d">·</b>e.g.<b class="d">·</b>Van<b class="d">·</b>Dijck<b class="d">·</b>or</div>
<div class="bt" style="left:137.60px;top:206.60px;transform:scaleX(0.9487)">Joanna.<b class="d">·</b>Peculiar<b class="d">·</b>sorts<b class="d">·</b>may<b class="d">·</b>suit<b class="d">·</b>a<b class="d">·</b>particular<b class="d">·</b>text<b class="d">·</b>-<b class="d">·</b>see<b class="d">·</b>the<b class="d">·</b>Poliphilus<b class="d">·</b>asterisk,<b class="d">·</b>the<b class="d">·</b>square<b class="d">·</b>brackets<b class="d">·</b>of<b class="d">·</b>Bell,<b class="d">·</b>and<b class="d">·</b>the<b class="d">·</b>capital<b class="d">·</b>Q,<b class="d">·</b>the<b class="d">·</b>ampersand<b class="d">·</b>and<b class="d">·</b>the</div>
<div class="bt" style="left:137.80px;top:250.70px;transform:scaleX(0.9538)">deliciously<b class="d">·</b>generous<b class="d">·</b>brackets<b class="d">·</b>of<b class="d">·</b>Van<b class="d">·</b>Dijck<b class="d">·</b>italic.<b class="d">·</b>Many<b class="d">·</b>degrees<b class="d">·</b>of<b class="d">·</b>sub-headings<b class="d">·</b>will<b class="d">·</b>call<b class="d">·</b>for<b class="d">·</b>a<b class="d">·</b>good<b class="d">·</b>relationship<b class="d">·</b>between<b class="d">·</b>capitals,<b class="d">·</b>small<b class="d">·</b>caps<b class="d">·</b>and</div>
<div class="bt" style="left:136.83px;top:263.00px;transform:scaleX(0.9672)">italic,<b class="d">·</b>if<b class="d">·</b>not<b class="d">·</b>also<b class="d">·</b>a<b class="d">·</b>related<b class="d">·</b>or<b class="d">·</b>contrasting<b class="d">·</b>bold.<b class="d">·</b>I<b class="d">·</b>find<b class="d">·</b>few<b class="d">·</b>serif<b class="d">·</b>bolds<b class="d">·</b>satisfactory<b class="d">·</b>-<b class="d">·</b>exceptions<b class="d">·</b>being<b class="d">·</b>Clarendon<b class="d">·</b>and<b class="d">·</b>Walbaum<b class="d">·</b>Medium.<b class="d">·</b>Sans<b class="d">·</b>serif</div>
<div class="bt" style="left:138.20px;top:309.00px;transform:scaleX(0.9643)">bolds<b class="d">·</b>such<b class="d">·</b>as<b class="d">·</b>Gill<b class="d">·</b>Bold<b class="d">·</b>and<b class="d">·</b>Futura<b class="d">·</b>Bold<b class="d">·</b>will<b class="d">·</b>mix<b class="d">·</b>well<b class="d">·</b>with<b class="d">·</b>most<b class="d">·</b>serif<b class="d">·</b>types.<b class="d">·</b>It<b class="d">·</b>is<b class="d">·</b>worth<b class="d">·</b>noting<b class="d">·</b>that<b class="d">·</b>the<b class="d">·</b>most<b class="d">·</b>satisfactory<b class="d">·</b>bolds<b class="d">·</b>are<b class="d">·</b>often<b class="d">·</b>good<b class="d">·</b>text</div>
<div class="bt" style="left:138.00px;top:321.20px;transform:scaleX(0.9781)">faces<b class="d">·</b>in<b class="d">·</b>their<b class="d">·</b>own<b class="d">·</b>right.<b class="d">·</b>The<b class="d">·</b>suitability<b class="d">·</b>of<b class="d">·</b>sans<b class="d">·</b>serif<b class="d">·</b>as<b class="d">·</b>a<b class="d">·</b>text<b class="d">·</b>face<b class="d">·</b>is<b class="d">·</b>more<b class="d">·</b>a<b class="d">·</b>matter<b class="d">·</b>of<b class="d">·</b>clarity<b class="d">·</b>and<b class="d">·</b>economy<b class="d">·</b>than<b class="d">·</b>style.<b class="d">·</b>Though<b class="d">·</b>sans<b class="d">·</b>serif<b class="d">·</b>may<b class="d">·</b>be</div>
<div class="bt" style="left:138.40px;top:367.60px;transform:scaleX(0.9503)">more<b class="d">·</b>legible<b class="d">·</b>than<b class="d">·</b>readable<b class="d">·</b>(not<b class="d">·</b>a<b class="d">·</b>paradox),<b class="d">·</b>Gill<b class="d">·</b>Sans<b class="d">·</b>is<b class="d">·</b>perfectly<b class="d">·</b>suitable<b class="d">·</b>for<b class="d">·</b>small<b class="d">·</b>formats<b class="d">·</b>with<b class="d">·</b>relatively<b class="d">·</b>little<b class="d">·</b>text<b class="d">·</b>per<b class="d">·</b>page,<b class="d">·</b>e.g.<b class="d">·</b>a<b class="d">·</b>paperback<b class="d">·</b>or</div>
<div class="bt" style="left:138.40px;top:379.80px;transform:scaleX(0.9601)">a<b class="d">·</b>prayer<b class="d">·</b>book.<b class="d">·</b>Leading,<b class="d">·</b>or<b class="d">·</b>spacing<b class="d">·</b>between<b class="d">·</b>the<b class="d">·</b>lines<b class="d">·</b>of<b class="d">·</b>text,<b class="d">·</b>will<b class="d">·</b>also<b class="d">·</b>affect<b class="d">·</b>the<b class="d">·</b>colour<b class="d">·</b>of<b class="d">·</b>a<b class="d">·</b>type.<b class="d">·</b>This<b class="d">·</b>last<b class="d">·</b>point<b class="d">·</b>incidentally<b class="d">·</b>has<b class="d">·</b>a<b class="d">·</b>bearing<b class="d">·</b>on<b class="d">·</b>the</div>
<div class="bt" style="left:140.50px;top:423.40px;transform:scaleX(0.9681)">pointless<b class="d">·</b>arguments<b class="d">·</b>over<b class="d">·</b>justified/unjustified<b class="d">·</b>setting.<b class="d">·</b>Justified<b class="d">·</b>setting<b class="d">·</b>of<b class="d">·</b>the<b class="d">·</b>main<b class="d">·</b>text<b class="d">·</b>gives<b class="d">·</b>comfort<b class="d">·</b>to<b class="d">·</b>the<b class="d">·</b>eye,<b class="d">·</b>giving<b class="d">·</b>it<b class="d">·</b>a<b class="d">·</b>consistent<b class="d">·</b>distance<b class="d">·</b>to</div>
<div class="bt" style="left:144.00px;top:436.00px;transform:scaleX(0.9715)">travel<b class="d">·</b>back<b class="d">·</b>to<b class="d">·</b>the<b class="d">·</b>start<b class="d">·</b>of<b class="d">·</b>the<b class="d">·</b>next<b class="d">·</b>line.<b class="d">·</b>Advocates<b class="d">·</b>of<b class="d">·</b>unjustified<b class="d">·</b>setting<b class="d">·</b>for<b class="d">·</b>main<b class="d">·</b>texts<b class="d">·</b>often<b class="d">·</b>ruin<b class="d">·</b>their<b class="d">·</b>case<b class="d">·</b>by<b class="d">·</b>liberally<b class="d">·</b>-<b class="d">·</b>and<b class="d">·</b>badly<b class="d">·</b>-<b class="d">·</b>breaking</div>
<div class="bt" style="left:139.04px;top:478.20px;transform:scaleX(0.9574)">words<b class="d">·</b>in<b class="d">·</b>order<b class="d">·</b>to<b class="d">·</b>maintain<b class="d">·</b>a<b class="d">·</b>sort<b class="d">·</b>of<b class="d">·</b>even<b class="d">·</b>right-hand<b class="d">·</b>edge.<b class="d">·</b>In<b class="d">·</b>my<b class="d">·</b>experience<b class="d">·</b>there<b class="d">·</b>should<b class="d">·</b>in<b class="d">·</b>fact<b class="d">·</b>be<b class="d">·</b>far<b class="d">·</b>fewer<b class="d">·</b>word<b class="d">·</b>breaks<b class="d">·</b>in<b class="d">·</b>well-set<b class="d">·</b>justified<b class="d">·</b>type</div>
<div class="bt" style="left:140.00px;top:490.80px;transform:scaleX(0.9314)">than<b class="d">·</b>there<b class="d">·</b>usually<b class="d">·</b>are.<b class="d">·</b>When<b class="d">·</b>using<b class="d">·</b>Poliphilus<b class="d">·</b>I<b class="d">·</b>confess<b class="d">·</b>to<b class="d">·</b>actually<b class="d">·</b>enjoying<b class="d">·</b>occasional<b class="d">·</b>word<b class="d">·</b>breaks<b class="d">·</b>-<b class="d">·</b>the<b class="d">·</b>obl<b class="d">·</b>ique<b class="d">·</b>hyphen<b class="d">·</b>is<b class="d">·</b>deliciously<b class="d">·</b>surreptitious.</div><div class="a" style="left:160.0px;top:160px;width:1px;height:316px;background:rgba(185,120,255,0.7)"></div><div class="a" style="left:207.0px;top:160px;width:1px;height:316px;background:rgba(185,120,255,0.7)"></div><div class="a" style="left:213.8px;top:160px;width:1px;height:316px;background:rgba(185,120,255,0.7)"></div><div class="a" style="left:260.9px;top:160px;width:1px;height:316px;background:rgba(185,120,255,0.7)"></div><div class="a" style="left:267.2px;top:160px;width:1px;height:316px;background:rgba(185,120,255,0.7)"></div><div class="a" style="left:314.2px;top:160px;width:1px;height:316px;background:rgba(185,120,255,0.7)"></div><div class="a" style="left:321.0px;top:160px;width:1px;height:316px;background:rgba(185,120,255,0.7)"></div><div class="a" style="left:368.0px;top:160px;width:1px;height:316px;background:rgba(185,120,255,0.7)"></div><div class="a" style="left:398.5px;top:160px;width:1px;height:316px;background:rgba(185,120,255,0.7)"></div><div class="a" style="left:445.9px;top:160px;width:1px;height:316px;background:rgba(185,120,255,0.7)"></div><div class="a" style="left:452.8px;top:160px;width:1px;height:316px;background:rgba(185,120,255,0.7)"></div><div class="a" style="left:499.8px;top:160px;width:1px;height:316px;background:rgba(185,120,255,0.7)"></div><div class="a" style="left:506.1px;top:160px;width:1px;height:316px;background:rgba(185,120,255,0.7)"></div><div class="a" style="left:553.1px;top:160px;width:1px;height:316px;background:rgba(185,120,255,0.7)"></div><div class="a" style="left:560.0px;top:160px;width:1px;height:316px;background:rgba(185,120,255,0.7)"></div><div class="a" style="left:607.3px;top:160px;width:1px;height:316px;background:rgba(185,120,255,0.7)"></div><div class="a" style="left:160px;top:160px;width:448px;height:1px;background:rgba(230,150,235,0.8);"></div><div class="a" style="left:160px;top:476px;width:448px;height:1px;background:rgba(230,150,235,0.8);"></div><div class="bd" style="left:631.2px;top:180.2px;width:3.6px;height:3.6px"></div><div class="bd" style="left:638.2px;top:180.2px;width:3.6px;height:3.6px"></div><div class="bd" style="left:631.2px;top:352.2px;width:3.6px;height:3.6px"></div><div class="bd" style="left:632.2px;top:409.2px;width:3.6px;height:3.6px"></div><div class="bd" style="left:638.2px;top:409.2px;width:3.6px;height:3.6px"></div><div class="a" style="left:614.5px;top:470px;width:5px;height:5px;border-radius:50%;background:#cc1c24"></div><div class="t" style="left:620px;top:453px;font:23px 'Liberation Sans';color:#3f97ee;transform:scaleX(0.75)">#</div><svg class="a" style="left:622px;top:225.5px" width="13" height="8" viewBox="0 0 13 8"><path d="M1 5.5C2.5 2 4.5 1.5 6.5 3.5S10.5 5.5 12 2" fill="none" stroke="#3f97ee" stroke-width="1.6"/></svg><svg class="a" style="left:622px;top:282.5px" width="13" height="8" viewBox="0 0 13 8"><path d="M1 5.5C2.5 2 4.5 1.5 6.5 3.5S10.5 5.5 12 2" fill="none" stroke="#3f97ee" stroke-width="1.6"/></svg><div class="a" style="left:626.5px;top:144.5px;width:3px;height:6px;background:rgba(63,151,238,0.75);"></div><div class="a" style="left:613px;top:157px;width:3.5px;height:6px;background:rgba(63,151,238,0.75);"></div><div class="a" style="left:626.5px;top:383px;width:2.5px;height:5px;background:rgba(63,151,238,0.75);"></div><div class="a" style="left:625.5px;top:440px;width:2.5px;height:5px;background:rgba(63,151,238,0.75);"></div><div class="a" style="left:628.5px;top:494px;width:2.5px;height:5px;background:rgba(63,151,238,0.75);"></div><div class="a" style="left:26px;top:577px;width:681px;height:12px;background:#444444;"></div><div class="a" style="left:26px;top:577px;width:681px;height:1px;background:#383838;"></div><div class="t" style="left:35.00px;top:578.30px;color:#dcdcdc;font:bold 8.5px 'Liberation Sans';transform:scale(0.7241,1.0000);">49.12%</div><svg class="a" style="left:60px;top:581px;" width="7" height="5" viewBox="0 0 7 5"><path d="M1 1l2.5 2.5L6 1" fill="none" stroke="#bbb" stroke-width="1"/></svg><svg class="a" style="left:73px;top:579px;" width="8" height="9" viewBox="0 0 8 9"><path d="M1 1v7M7 1L3 4.5 7 8z" fill="#aaa" stroke="#aaa" stroke-width="0.8"/></svg><svg class="a" style="left:86px;top:579px;" width="7" height="9" viewBox="0 0 7 9"><path d="M6 1L2 4.5 6 8z" fill="#aaa"/></svg><div class="a" style="left:98px;top:578.5px;width:53px;height:10px;background:#333;border:1px solid #5a5a5a;border-radius:2px"></div><div class="t" style="left:100.00px;top:578.30px;color:#e0e0e0;font:8.5px 'Liberation Sans';transform:scale(1.1250,1.0000);">2</div><div class="a" style="left:140px;top:578.5px;width:1px;height:10px;background:#5a5a5a;"></div><svg class="a" style="left:143px;top:581px;" width="7" height="5" viewBox="0 0 7 5"><path d="M1 1l2.5 2.5L6 1" fill="none" stroke="#bbb" stroke-width="1"/></svg><svg class="a" style="left:158px;top:579px;" width="7" height="9" viewBox="0 0 7 9"><path d="M1 1l4 3.5L1 8z" fill="#aaa"/></svg><svg class="a" style="left:171px;top:579px;" width="8" height="9" viewBox="0 0 8 9"><path d="M7 1v7M1 1l4 3.5L1 8z" fill="#aaa" stroke="#aaa" stroke-width="0.8"/></svg><svg class="a" style="left:185px;top:578px;" width="12" height="11" viewBox="0 0 12 11"><path d="M2 9V5a4 4 0 0 1 8 0v4" fill="none" stroke="#aaa" stroke-width="1.6"/><circle cx="10.5" cy="9.5" r="0.8" fill="#aaa"/></svg><div class="t" style="left:205.18px;top:578.30px;color:#cfcfcf;font:8.5px 'Liberation Sans';transform:scale(0.8197,1.0000);">[Basic] (working)</div><svg class="a" style="left:268px;top:581px;" width="7" height="5" viewBox="0 0 7 5"><path d="M1 1l2.5 2.5L6 1" fill="none" stroke="#bbb" stroke-width="1"/></svg><div class="a" style="left:283.5px;top:579.8px;width:7px;height:7px;border-radius:50%;background:#2bb540"></div><div class="t" style="left:292.18px;top:578.30px;color:#d0d0d0;font:8.5px 'Liberation Sans';transform:scale(0.8235,1.0000);">No errors</div><svg class="a" style="left:331px;top:581px;" width="7" height="5" viewBox="0 0 7 5"><path d="M1 1l2.5 2.5L6 1" fill="none" stroke="#bbb" stroke-width="1"/></svg><div class="a" style="left:340px;top:577px;width:1px;height:12px;background:#3a3a3a;"></div><svg class="a" style="left:343px;top:579px;" width="7" height="9" viewBox="0 0 7 9"><path d="M5 1.5L2 4.5 5 7.5" fill="none" stroke="#999" stroke-width="0.9"/></svg><div class="a" style="left:399px;top:579px;width:214px;height:9px;background:#666666;border-radius:4.5px"></div><svg class="a" style="left:675px;top:579px;" width="7" height="9" viewBox="0 0 7 9"><path d="M2 1.5L5 4.5 2 7.5" fill="none" stroke="#999" stroke-width="0.9"/></svg><svg class="a" style="left:683px;top:578px;" width="13" height="10" viewBox="0 0 13 10"><rect x="0.5" y="0.5" width="12" height="9" fill="none" stroke="#bbb"/><path d="M6.5 0.5v9" stroke="#bbb"/></svg><div class="a" style="left:708px;top:73px;width:314px;height:8px;background:#3b3b3b;"></div><div class="t" style="left:844.75px;top:71.50px;color:#aaa;font:9px 'Liberation Sans';transform:scale(1.2500,1.0000);">»</div><div class="t" style="left:1011.75px;top:71.50px;color:#aaa;font:9px 'Liberation Sans';transform:scale(1.2500,1.0000);">»</div><div class="a" style="left:854.5px;top:73px;width:2px;height:516px;background:#393939;"></div><div class="a" style="left:708px;top:81px;width:146.5px;height:15.5px;background:#3f3f3f;"></div><div class="a" style="left:708px;top:81px;width:40px;height:15.5px;background:#535353;"></div><svg class="a" style="left:711px;top:85px;" width="5" height="8" viewBox="0 0 5 8"><path d="M1 3l1.5-1.5L4 3M1 5l1.5 1.5L4 5" fill="none" stroke="#aaa" stroke-width="0.7"/></svg><div class="t" style="left:719.00px;top:84.00px;color:#eeeeee;font:bold 9px 'Liberation Sans';transform:scale(0.8036,1.0000);">Stroke</div><div class="a" style="left:843px;top:86px;width:10px;height:7px;background:linear-gradient(#8c8c8c 0 2px,#6e6e6e 2px 3px,#8c8c8c 3px 4.5px,#6e6e6e 4.5px 5.5px,#8c8c8c 5.5px 7px);"></div><div class="a" style="left:708px;top:96.5px;width:146.5px;height:191px;background:#535353;"></div><div class="t" style="left:728.90px;top:103.00px;color:#ececec;font:8.2px 'Liberation Sans';transform:scale(0.8185,1.0000);">Weight:</div><div class="t" style="left:737.70px;top:119.30px;color:#ececec;font:8.2px 'Liberation Sans';transform:scale(0.7824,1.0000);">Cap:</div><div class="t" style="left:716.11px;top:136.60px;color:#ececec;font:8.2px 'Liberation Sans';transform:scale(0.8947,1.0000);">Mitre Limit:</div><div class="t" style="left:737.00px;top:153.00px;color:#ececec;font:8.2px 'Liberation Sans';transform:scale(0.8235,1.0000);">Join:</div><div class="t" style="left:713.00px;top:171.00px;color:#ececec;font:8.2px 'Liberation Sans';transform:scale(0.8261,1.0000);">Align Stroke:</div><div class="t" style="left:734.40px;top:191.40px;color:#ececec;font:8.2px 'Liberation Sans';transform:scale(0.8737,1.0000);">Type:</div><div class="t" style="left:719.73px;top:207.00px;color:#ececec;font:8.2px 'Liberation Sans';transform:scale(0.8686,1.0000);">Start/End:</div><div class="t" style="left:732.98px;top:224.50px;color:#ececec;font:8.2px 'Liberation Sans';transform:scale(0.8190,1.0000);">Scale:</div><div class="t" style="left:733.80px;top:240.60px;color:#ececec;font:8.2px 'Liberation Sans';transform:scale(0.8600,1.0000);">Align:</div><div class="t" style="left:715.70px;top:258.00px;color:#ececec;font:8.2px 'Liberation Sans';transform:scale(0.8209,1.0000);">Gap Colour:</div><div class="t" style="left:723.60px;top:274.40px;color:#ececec;font:8.2px 'Liberation Sans';transform:scale(0.8303,1.0000);">Gap Tint:</div><div class="a" style="left:754px;top:101px;width:11px;height:12px;background:#5a5a5a;border-radius:2px 0 0 2px"></div><svg class="a" style="left:754px;top:101px;" width="10" height="12" viewBox="0 0 10 12"><path d="M2.5 4.5l2.5-3 2.5 3M2.5 7.5l2.5 3 2.5-3" fill="none" stroke="#aaa" stroke-width="0.9"/></svg><div class="a" style="left:765px;top:101px;width:32px;height:12px;background:#474747;"></div><div class="a" style="left:797px;top:101px;width:11px;height:12px;background:#4a4a4a;border:1px solid #5e5e5e;border-radius:0 2px 2px 0"></div><svg class="a" style="left:799px;top:105px;" width="7" height="5" viewBox="0 0 7 5"><path d="M1 1l2.5 2.5L6 1" fill="none" stroke="#bbb" stroke-width="1"/></svg><div class="a" style="left:755px;top:116.5px;width:12px;height:13px;background:#333;border-radius:2px"></div><svg class="a" style="left:756px;top:118px;" width="10" height="10" viewBox="0 0 10 10"><rect x="3" y="1" width="6" height="8" fill="#ccc"/><path d="M0 5h3" stroke="#ccc"/><rect x="3" y="3.5" width="2" height="3" fill="#333"/></svg><svg class="a" style="left:771px;top:118px;" width="10" height="10" viewBox="0 0 10 10"><path d="M4 1h5v8H4a4 4 0 0 1 0-8z" fill="#ccc"/><rect x="4" y="3.5" width="2" height="3" fill="#535353"/></svg><svg class="a" style="left:785px;top:118px;" width="10" height="10" viewBox="0 0 10 10"><rect x="1" y="1" width="8" height="8" fill="#ccc"/><rect x="3.5" y="3.5" width="3" height="3" fill="#535353"/></svg><div class="a" style="left:754px;top:134px;width:11px;height:13px;background:#5a5a5a;border-radius:2px 0 0 2px"></div><svg class="a" style="left:754px;top:134px;" width="10" height="13" viewBox="0 0 10 13"><path d="M2.5 5.0l2.5-3 2.5 3M2.5 8.0l2.5 3 2.5-3" fill="none" stroke="#aaa" stroke-width="0.9"/></svg><div class="a" style="left:765px;top:134px;width:23px;height:13px;background:#474747;border:1px solid #5e5e5e"></div><div class="t" style="left:768.00px;top:135.60px;color:#e6e6e6;font:8.5px 'Liberation Sans';transform:scale(1.1250,1.0000);">4</div><div class="t" style="left:791.00px;top:136.20px;color:#dddddd;font:8.5px 'Liberation Sans';">x</div><div class="a" style="left:755px;top:150px;width:12px;height:13px;background:#333;border-radius:2px"></div><svg class="a" style="left:756px;top:151px;" width="10" height="10" viewBox="0 0 10 10"><path d="M1 1h8v3H4v5H1z" fill="#ccc"/><rect x="4.5" y="5" width="2" height="2" fill="#333"/></svg><svg class="a" style="left:771px;top:151px;" width="10" height="10" viewBox="0 0 10 10"><path d="M1 9V5a4 4 0 0 1 4-4h4v3H5v5z" fill="#ccc"/></svg><svg class="a" style="left:785px;top:151px;" width="10" height="10" viewBox="0 0 10 10"><path d="M1 9V4l3-3h5v3H5v5z" fill="#ccc"/></svg><svg class="a" style="left:756px;top:169px;" width="10" height="11" viewBox="0 0 10 11"><path d="M1 1v9h8M3 1v7h6" fill="none" stroke="#8a8a8a" stroke-width="1"/></svg><svg class="a" style="left:771px;top:169px;" width="10" height="11" viewBox="0 0 10 11"><path d="M1 1v9h8M3 1v7h6" fill="none" stroke="#8a8a8a" stroke-width="1"/></svg><svg class="a" style="left:785px;top:169px;" width="10" height="11" viewBox="0 0 10 11"><path d="M1 1v9h8M3 1v7h6" fill="none" stroke="#8a8a8a" stroke-width="1"/></svg><div class="a" style="left:710px;top:184px;width:142.5px;height:1px;background:#4a4a4a;"></div><div class="a" style="left:754px;top:189px;width:86px;height:13px;background:#f0f0f0;border-radius:2px 0 0 2px"></div><div class="a" style="left:757px;top:193px;width:78px;height:4.5px;background:#000;"></div><div class="a" style="left:840px;top:189px;width:11px;height:13px;background:#4a4a4a;border:1px solid #5e5e5e;border-radius:0 2px 2px 0"></div><svg class="a" style="left:842px;top:193.5px;" width="7" height="5" viewBox="0 0 7 5"><path d="M1 1l2.5 2.5L6 1" fill="none" stroke="#bbb" stroke-width="1"/></svg><div class="a" style="left:754px;top:205px;width:26px;height:12.5px;background:#f0f0f0;border-radius:2px 0 0 2px"></div><div class="t" style="left:755.11px;top:206.00px;color:#1a1a1a;font:8.5px 'Liberation Sans';transform:scale(0.8947,1.0000);">None</div><div class="a" style="left:780px;top:205px;width:10px;height:12.5px;background:#4a4a4a;border:1px solid #5e5e5e"></div><svg class="a" style="left:781.5px;top:209px;" width="7" height="5" viewBox="0 0 7 5"><path d="M1 1l2.5 2.5L6 1" fill="none" stroke="#bbb" stroke-width="1"/></svg><svg class="a" style="left:798px;top:206px;" width="11" height="10" viewBox="0 0 11 10"><path d="M1 3h8M7 1l2 2-2 2M10 7H2M4 5L2 7l2 2" fill="none" stroke="#ccc" stroke-width="0.9"/></svg><div class="a" style="left:815px;top:205px;width:25px;height:12.5px;background:#f0f0f0;border-radius:2px 0 0 2px"></div><div class="t" style="left:816.11px;top:206.00px;color:#1a1a1a;font:8.5px 'Liberation Sans';transform:scale(0.8947,1.0000);">None</div><div class="a" style="left:840px;top:205px;width:11px;height:12.5px;background:#4a4a4a;border:1px solid #5e5e5e"></div><svg class="a" style="left:842px;top:209px;" width="7" height="5" viewBox="0 0 7 5"><path d="M1 1l2.5 2.5L6 1" fill="none" stroke="#bbb" stroke-width="1"/></svg><div class="a" style="left:754px;top:222px;width:11px;height:13px;background:#5a5a5a;border-radius:2px 0 0 2px"></div><svg class="a" style="left:754px;top:222px;" width="10" height="13" viewBox="0 0 10 13"><path d="M2.5 5.0l2.5-3 2.5 3M2.5 8.0l2.5 3 2.5-3" fill="none" stroke="#aaa" stroke-width="0.9"/></svg><div class="a" style="left:765px;top:222px;width:26px;height:13px;background:#474747;border:1px solid #5e5e5e"></div><div class="t" style="left:767.19px;top:223.50px;color:#e6e6e6;font:8.5px 'Liberation Sans';transform:scale(0.8095,1.0000);">100%</div><svg class="a" style="left:798px;top:222px;" width="10" height="13" viewBox="0 0 10 13"><path d="M3 5V3a2 2 0 0 1 4 0v2M3 8v2a2 2 0 0 0 4 0V8M1 2l8 9" fill="none" stroke="#aaa" stroke-width="0.9"/></svg><div class="a" style="left:815px;top:222px;width:11px;height:13px;background:#5a5a5a;border-radius:2px 0 0 2px"></div><svg class="a" style="left:815px;top:222px;" width="10" height="13" viewBox="0 0 10 13"><path d="M2.5 5.0l2.5-3 2.5 3M2.5 8.0l2.5 3 2.5-3" fill="none" stroke="#aaa" stroke-width="0.9"/></svg><div class="a" style="left:826px;top:222px;width:25px;height:13px;background:#474747;border:1px solid #5e5e5e"></div><div class="t" style="left:828.19px;top:223.50px;color:#e6e6e6;font:8.5px 'Liberation Sans';transform:scale(0.8095,1.0000);">100%</div><svg class="a" style="left:756px;top:239px;" width="11" height="11" viewBox="0 0 11 11"><path d="M1 3.5h7M6 1.5l2 2-2 2M1 7.5h7M6 5.5l2 2-2 2" fill="none" stroke="#ccc" stroke-width="0.9"/></svg><div class="a" style="left:769px;top:237.5px;width:14px;height:14px;background:#333;border-radius:2px"></div><svg class="a" style="left:770px;top:239px;" width="12" height="11" viewBox="0 0 12 11"><path d="M1 2h10M2 5h7M7 3l2 2-2 2M1 9h10" fill="none" stroke="#ddd" stroke-width="0.9"/></svg><div class="a" style="left:754px;top:256px;width:86px;height:12.5px;background:#efefef;border-radius:2px 0 0 2px"></div><div class="a" style="left:757px;top:258px;width:8px;height:8px;background:#fff;border:1px solid #555"></div><svg class="a" style="left:757px;top:258px;" width="8" height="8" viewBox="0 0 8 8"><path d="M0.5 7.5l7-7" stroke="#e02020" stroke-width="1.3"/></svg><div class="t" style="left:766.12px;top:257.00px;color:#8e8e8e;font:8.5px 'Liberation Sans';transform:scale(0.8750,1.0000);">[None]</div><div class="a" style="left:840px;top:256px;width:11px;height:12.5px;background:#5a5a5a;border-radius:0 2px 2px 0"></div><svg class="a" style="left:842px;top:260px;" width="7" height="5" viewBox="0 0 7 5"><path d="M1 1l2.5 2.5L6 1" fill="none" stroke="#999" stroke-width="1"/></svg><div class="a" style="left:754px;top:272px;width:31px;height:13px;background:#4b4b4b;border-radius:2px"></div><svg class="a" style="left:777px;top:275px;" width="7" height="7" viewBox="0 0 7 7"><path d="M2 1l2.5 2.5L2 6" fill="none" stroke="#aaa" stroke-width="0.9"/></svg><div class="a" style="left:708px;top:289.3px;width:146.5px;height:16.7px;background:#3f3f3f;"></div><div class="a" style="left:708px;top:289.3px;width:35px;height:16.7px;background:#484848;"></div><div class="a" style="left:743px;top:289.3px;width:52px;height:16.7px;background:#535353;"></div><div class="a" style="left:795px;top:289.3px;width:35px;height:16.7px;background:#484848;"></div><div class="t" style="left:715.00px;top:293.00px;color:#b8b8b8;font:9px 'Liberation Sans';transform:scale(0.8438,1.0000);">Charact</div><svg class="a" style="left:746px;top:294px;" width="5" height="8" viewBox="0 0 5 8"><path d="M1 3l1.5-1.5L4 3M1 5l1.5 1.5L4 5" fill="none" stroke="#aaa" stroke-width="0.7"/></svg><div class="t" style="left:752.69px;top:293.00px;color:#eeeeee;font:bold 9px 'Liberation Sans';transform:scale(0.8140,1.0000);">Paragraph</div><div class="t" style="left:802.50px;top:293.00px;color:#b8b8b8;font:9px 'Liberation Sans';transform:scale(0.8833,1.0000);">Text Wr</div><div class="a" style="left:843px;top:294px;width:10px;height:7px;background:linear-gradient(#8c8c8c 0 2px,#6e6e6e 2px 3px,#8c8c8c 3px 4.5px,#6e6e6e 4.5px 5.5px,#8c8c8c 5.5px 7px);"></div><div class="a" style="left:708px;top:307.8px;width:146.5px;height:16.7px;background:#3f3f3f;"></div><div class="a" style="left:708px;top:307.8px;width:38px;height:16.7px;background:#484848;"></div><div class="a" style="left:746px;top:307.8px;width:32px;height:16.7px;background:#535353;"></div><div class="t" style="left:714.65px;top:312.00px;color:#b8b8b8;font:9px 'Liberation Sans';transform:scale(0.8462,1.0000);">Layers</div><div class="t" style="left:751.66px;top:312.00px;color:#eeeeee;font:bold 9px 'Liberation Sans';transform:scale(0.8409,1.0000);">Links</div><div class="a" style="left:843px;top:313px;width:10px;height:7px;background:linear-gradient(#8c8c8c 0 2px,#6e6e6e 2px 3px,#8c8c8c 3px 4.5px,#6e6e6e 4.5px 5.5px,#8c8c8c 5.5px 7px);"></div><div class="a" style="left:708px;top:324.5px;width:146.5px;height:265px;background:#535353;"></div><div class="a" style="left:708px;top:338px;width:146.5px;height:1px;background:#474747;"></div><div class="t" style="left:711.00px;top:326.80px;color:#f0f0f0;font:bold 8.5px 'Liberation Sans';transform:scale(0.7609,1.0000);">Name</div><div class="a" style="left:802.5px;top:327px;width:1px;height:10px;background:#454545;"></div><div class="a" style="left:824.5px;top:327px;width:1px;height:10px;background:#454545;"></div><div class="a" style="left:846px;top:327px;width:1px;height:10px;background:#454545;"></div><svg class="a" style="left:808px;top:327px;" width="10" height="9" viewBox="0 0 10 9"><path d="M5 1L9 8H1z" fill="none" stroke="#bbb" stroke-width="0.9"/><path d="M5 3.5v2.5M5 6.8v.6" stroke="#bbb" stroke-width="0.9"/></svg><svg class="a" style="left:831px;top:327px;" width="12" height="9" viewBox="0 0 12 9"><path d="M1 1h4l2 2v6H1z" fill="none" stroke="#bbb" stroke-width="0.9"/><path d="M9 4l1.5-1.5L12 4z" fill="#bbb"/></svg><div class="a" style="left:708px;top:400px;width:146.5px;height:1px;background:#4b4b4b;"></div><svg class="a" style="left:711px;top:407px;" width="7" height="5" viewBox="0 0 7 5"><path d="M1 1l2.5 2.5L6 1" fill="none" stroke="#bbb" stroke-width="1"/></svg><div class="t" style="left:723.00px;top:405.20px;color:#e6e6e6;font:bold 8.5px 'Liberation Sans';transform:scale(0.7241,1.0000);">0 Links</div><svg class="a" style="left:762px;top:404px;" width="12" height="11" viewBox="0 0 12 11"><rect x="1" y="4" width="6" height="5" fill="none" stroke="#999" stroke-width="0.8"/><rect x="5" y="1" width="6" height="6" fill="none" stroke="#999" stroke-width="0.8"/></svg><svg class="a" style="left:779px;top:404px;" width="12" height="11" viewBox="0 0 12 11"><rect x="1" y="3" width="5" height="4" rx="2" fill="none" stroke="#999"/><rect x="6" y="3" width="5" height="4" rx="2" fill="none" stroke="#999"/></svg><svg class="a" style="left:796px;top:404px;" width="12" height="11" viewBox="0 0 12 11"><path d="M3 3h5l2 2v5H3z" fill="none" stroke="#999"/><path d="M1 6h4M4 4.5L5.5 6 4 7.5" fill="none" stroke="#999" stroke-width="0.8"/></svg><svg class="a" style="left:814px;top:404px;" width="12" height="11" viewBox="0 0 12 11"><path d="M9 4a4 4 0 1 0 0 3" fill="none" stroke="#999"/><path d="M8 1v3h3" fill="none" stroke="#999" stroke-width="0.8"/></svg><svg class="a" style="left:831px;top:404px;" width="12" height="11" viewBox="0 0 12 11"><path d="M2 10l1-3 6-6 2 2-6 6z" fill="none" stroke="#888" stroke-width="0.9"/></svg><div class="a" style="left:708px;top:420px;width:146.5px;height:1px;background:#4b4b4b;"></div><div class="t" style="left:711.00px;top:424.00px;color:#e6e6e6;font:bold 8.5px 'Liberation Sans';transform:scale(0.8286,1.0000);">Link Info</div><svg class="a" style="left:826px;top:425px;" width="6" height="8" viewBox="0 0 6 8"><path d="M5 1L1 4l4 3z" fill="#ccc"/></svg><svg class="a" style="left:841px;top:425px;" width="6" height="8" viewBox="0 0 6 8"><path d="M1 1l4 3-4 3z" fill="#ccc"/></svg><div class="a" style="left:708px;top:437px;width:146.5px;height:1px;background:#4b4b4b;"></div><div class="a" style="left:856.5px;top:81px;width:165.5px;height:15.7px;background:#3f3f3f;"></div><div class="a" style="left:856.5px;top:81px;width:38px;height:15.7px;background:#535353;"></div><div class="a" style="left:894.5px;top:81px;width:72px;height:15.7px;background:#484848;"></div><svg class="a" style="left:860px;top:85px;" width="5" height="8" viewBox="0 0 5 8"><path d="M1 3l1.5-1.5L4 3M1 5l1.5 1.5L4 5" fill="none" stroke="#aaa" stroke-width="0.7"/></svg><div class="t" style="left:866.72px;top:84.00px;color:#eeeeee;font:bold 9px 'Liberation Sans';transform:scale(0.7800,1.0000);">Pages</div><div class="t" style="left:900.63px;top:84.00px;color:#b8b8b8;font:9px 'Liberation Sans';transform:scale(0.8712,1.0000);">Page Transitions</div><div class="a" style="left:1010px;top:86px;width:10px;height:7px;background:linear-gradient(#8c8c8c 0 2px,#6e6e6e 2px 3px,#8c8c8c 3px 4.5px,#6e6e6e 4.5px 5.5px,#8c8c8c 5.5px 7px);"></div><div class="a" style="left:856.5px;top:96.7px;width:165.5px;height:150px;background:#535353;"></div><div class="t" style="left:857.21px;top:100.00px;color:#e0e0e0;font:8.5px 'Liberation Sans';transform:scale(0.7917,1.0000);">[None]</div><div class="a" style="left:999px;top:99.7px;width:10px;height:14px;background:#fff;"></div><div class="t" style="left:858.00px;top:117.70px;color:#e0e0e0;font:8.5px 'Liberation Sans';transform:scale(0.8088,1.0000);">A-Master</div><div class="a" style="left:989.3px;top:117.2px;width:9.5px;height:14.3px;background:#fff;"></div><div class="a" style="left:999.5px;top:117.2px;width:9.5px;height:14.3px;background:#fff;"></div><div class="a" style="left:856.5px;top:133.5px;width:165.5px;height:1px;background:#464646;"></div><div class="a" style="left:934.6px;top:134px;width:1.2px;height:97px;background:#6a6a6a;"></div><svg class="a" style="left:920.3px;top:135.6px;" width="30" height="18" viewBox="0 0 30 18"><rect width="30" height="18" fill="#fff"/><rect x="1" y="1.5" width="28" height="1.6" fill="#333"/><rect x="1" y="4.5" width="28" height="1.6" fill="#333"/><rect x="1" y="7.5" width="28" height="1.6" fill="#333"/><rect x="1" y="10.5" width="28" height="1.6" fill="#333"/><rect x="1" y="13.5" width="28" height="1.6" fill="#333"/><rect x="1" y="16" width="28" height="1.6" fill="#333"/><rect x="1" y="4.5" width="4" height="1.6" fill="#c22"/><rect x="14" y="13.5" width="8" height="1.6" fill="#c22"/><rect x="14.5" y="0" width="1" height="18" fill="#888"/></svg><div class="t" style="left:929.50px;top:156.50px;color:#e6e6e6;font:bold 9px 'Liberation Sans';transform:scale(0.7333,1.0000);">2–3</div><svg class="a" style="left:920.3px;top:171.3px;" width="30" height="21.5" viewBox="0 0 30 21.5"><rect width="15" height="21.5" fill="#2b5b9f"/><rect x="15" width="15" height="21.5" fill="#7c5aa0"/><path d="M3 4l5 14 5-14" stroke="#5a8ae0" stroke-width="2" fill="none"/><rect x="17" y="8" width="9" height="8" fill="#8ab0f0"/><rect x="0" y="0" width="4" height="5" fill="#fff"/><rect x="26" y="0" width="4" height="5" fill="#fff"/><text x="0.6" y="4.5" font-size="5" font-family="Liberation Sans" font-weight="bold">A</text><text x="26.3" y="4.5" font-size="5" font-family="Liberation Sans" font-weight="bold">A</text><rect x="17" y="18" width="11" height="1" fill="#2b5b9f"/></svg><div class="a" style="left:927.2px;top:196px;width:14.5px;height:9.5px;background:#1e88e8;"></div><div class="t" style="left:929.50px;top:195.80px;color:#ffffff;font:bold 9px 'Liberation Sans';transform:scale(0.7000,1.0000);">4–5</div><svg class="a" style="left:920.3px;top:210.3px;" width="30" height="13" viewBox="0 0 30 13"><rect width="30" height="13" fill="#fff"/><path d="M0 13L14 2" stroke="#c22" stroke-width="3"/><rect x="2" y="3" width="12" height="9" fill="#111"/><path d="M1 12L14 3M4 12L15 5" stroke="#d22" stroke-width="1.6"/><rect x="0" y="0" width="4" height="5" fill="#fff"/><text x="0.6" y="4.5" font-size="5" font-family="Liberation Sans" font-weight="bold">A</text><rect x="18" y="6" width="4" height="7" fill="#222"/><rect x="23" y="5" width="6" height="8" fill="#333"/><rect x="23" y="7" width="6" height="1.5" fill="#c22"/><text x="26.3" y="4.5" font-size="5" font-family="Liberation Sans" font-weight="bold">A</text></svg><div class="a" style="left:856.5px;top:223.5px;width:165.5px;height:8px;background:#535353;"></div><div class="a" style="left:1014.8px;top:134px;width:7px;height:97px;background:#4a4a4a;"></div><div class="a" style="left:1015px;top:162.8px;width:6px;height:37.6px;background:#686868;border-radius:3px"></div><svg class="a" style="left:1014px;top:136px;" width="8" height="6" viewBox="0 0 8 6"><path d="M1.5 4.5L4 2l2.5 2.5" fill="none" stroke="#999" stroke-width="0.8"/></svg><svg class="a" style="left:1014px;top:223px;" width="8" height="6" viewBox="0 0 8 6"><path d="M1.5 1.5L4 4l2.5-2.5" fill="none" stroke="#999" stroke-width="0.8"/></svg><div class="a" style="left:856.5px;top:231px;width:165.5px;height:1px;background:#4a4a4a;"></div><div class="t" style="left:858.00px;top:233.40px;color:#e6e6e6;font:bold 8.5px 'Liberation Sans';transform:scale(0.7000,1.0000);">8 Pages in 5 Spreads</div><svg class="a" style="left:964px;top:233px;" width="13" height="11" viewBox="0 0 13 11"><rect x="1" y="3" width="7" height="7" fill="none" stroke="#aaa"/><rect x="3.5" y="1" width="6" height="6" fill="#535353" stroke="#aaa"/><circle cx="11.5" cy="9.5" r="0.7" fill="#aaa"/></svg><svg class="a" style="left:982px;top:233px;" width="11" height="11" viewBox="0 0 11 11"><rect x="1" y="1" width="9" height="9" fill="none" stroke="#aaa"/><path d="M5.5 3v5M3 5.5h5" stroke="#aaa"/></svg><svg class="a" style="left:998px;top:232px;" width="10" height="12" viewBox="0 0 10 12"><path d="M1 3h8M3 3V1.5h4V3M2 3l.7 8h4.6L8 3" fill="none" stroke="#999" stroke-width="0.9"/></svg><div class="a" style="left:856.5px;top:245.5px;width:165.5px;height:2.4px;background:#393939;"></div><div class="a" style="left:856.5px;top:247.9px;width:165.5px;height:16px;background:#3f3f3f;"></div><div class="a" style="left:856.5px;top:247.9px;width:38px;height:16px;background:#484848;"></div><div class="a" style="left:894.4px;top:247.9px;width:49px;height:16px;background:#535353;"></div><div class="t" style="left:863.50px;top:251.00px;color:#b8b8b8;font:9px 'Liberation Sans';transform:scale(0.8846,1.0000);">Colour</div><svg class="a" style="left:898px;top:252px;" width="5" height="8" viewBox="0 0 5 8"><path d="M1 3l1.5-1.5L4 3M1 5l1.5 1.5L4 5" fill="none" stroke="#aaa" stroke-width="0.7"/></svg><div class="t" style="left:905.00px;top:251.00px;color:#eeeeee;font:bold 9px 'Liberation Sans';transform:scale(0.7683,1.0000);">Swatches</div><div class="a" style="left:1010px;top:253px;width:10px;height:7px;background:linear-gradient(#8c8c8c 0 2px,#6e6e6e 2px 3px,#8c8c8c 3px 4.5px,#6e6e6e 4.5px 5.5px,#8c8c8c 5.5px 7px);"></div><div class="a" style="left:856.5px;top:263.9px;width:165.5px;height:134px;background:#535353;"></div><div class="a" style="left:860px;top:268px;width:12px;height:12px;background:#cf1d1d;"></div><div class="a" style="left:865.5px;top:274px;width:12.5px;height:12.5px;background:#f5f5f5;border:1px solid #222"></div><div class="a" style="left:868px;top:276.5px;width:7.5px;height:7.5px;background:none;border:1.3px solid #222"></div><svg class="a" style="left:865.5px;top:274px;" width="13" height="13" viewBox="0 0 13 13"><path d="M1 12L12 1" stroke="#e02020" stroke-width="1.5"/></svg><svg class="a" style="left:873px;top:268px;" width="6" height="6" viewBox="0 0 6 6"><path d="M1 1h2.5a2 2 0 0 1 2 2v2" fill="none" stroke="#bbb" stroke-width="0.7"/></svg><div class="a" style="left:884.3px;top:271.5px;width:11px;height:12px;background:#333;border-radius:2px"></div><div class="a" style="left:887px;top:274.5px;width:6px;height:6px;background:none;border:1px solid #ccc"></div><div class="t" style="left:898.50px;top:271.00px;color:#999;font:bold 10px 'Liberation Serif';transform:scale(0.9286,1.0000);">T</div><div class="t" style="left:929.00px;top:271.50px;color:#e0e0e0;font:8.5px 'Liberation Sans';transform:scale(0.8125,1.0000);">Tint:</div><div class="a" style="left:946.4px;top:270px;width:32.4px;height:13px;background:#4b4b4b;"></div><svg class="a" style="left:971px;top:273px;" width="7" height="7" viewBox="0 0 7 7"><path d="M2 1l2.5 2.5L2 6" fill="none" stroke="#aaa" stroke-width="0.9"/></svg><div class="t" style="left:980.00px;top:271.50px;color:#e0e0e0;font:8.5px 'Liberation Sans';transform:scale(0.7857,1.0000);">%</div><div class="a" style="left:856.5px;top:288.4px;width:157.5px;height:12px;background:#4b6a8c;"></div><div class="a" style="left:868px;top:290.4px;width:8px;height:8px;background:#fff;border:1px solid #444"></div><svg class="a" style="left:868px;top:290.4px;" width="8" height="8" viewBox="0 0 8 8"><path d="M0.5 7.5l7-7" stroke="#e02020" stroke-width="1.3"/></svg><div class="t" style="left:879.14px;top:289.40px;color:#e6e6e6;font:8.5px 'Liberation Sans';transform:scale(0.8583,1.0000);">[None]</div><div class="a" style="left:868px;top:304px;width:8px;height:8px;background:#000;border:0.5px solid #333"></div><div class="t" style="left:879.20px;top:303.00px;color:#e6e6e6;font:8.5px 'Liberation Sans';transform:scale(0.8041,1.0000);">[Registration]</div><div class="a" style="left:868px;top:317.5px;width:8px;height:8px;background:#fff;border:0.5px solid #333"></div><div class="t" style="left:879.23px;top:316.50px;color:#e6e6e6;font:8.5px 'Liberation Sans';transform:scale(0.7692,1.0000);">[Paper]</div><div class="a" style="left:868px;top:331px;width:8px;height:8px;background:#000;border:0.5px solid #333"></div><div class="t" style="left:879.20px;top:330.00px;color:#e6e6e6;font:8.5px 'Liberation Sans';transform:scale(0.8000,1.0000);">[Black]</div><div class="a" style="left:868px;top:344.5px;width:8px;height:8px;background:#00a0e9;border:0.5px solid #333"></div><div class="t" style="left:880.00px;top:343.50px;color:#e6e6e6;font:8.5px 'Liberation Sans';transform:scale(0.8200,1.0000);">C=100 M=0 Y=0 K=0</div><div class="a" style="left:868px;top:358px;width:8px;height:8px;background:#e4007f;border:0.5px solid #333"></div><div class="t" style="left:880.00px;top:357.00px;color:#e6e6e6;font:8.5px 'Liberation Sans';transform:scale(0.8125,1.0000);">C=0 M=100 Y=0 K=0</div><div class="a" style="left:868px;top:371.6px;width:8px;height:8px;background:#fff000;border:0.5px solid #333"></div><div class="t" style="left:880.00px;top:370.60px;color:#e6e6e6;font:8.5px 'Liberation Sans';transform:scale(0.8200,1.0000);">C=0 M=0 Y=100 K=0</div><svg class="a" style="left:978px;top:290.4px;" width="9" height="9" viewBox="0 0 9 9"><path d="M1 1l7 7M8 1L1 8" stroke="#bbb" stroke-width="0.9"/><circle cx="2" cy="2" r="1" fill="#bbb"/><circle cx="7" cy="7" r="1" fill="#bbb"/></svg><svg class="a" style="left:978px;top:304px;" width="9" height="9" viewBox="0 0 9 9"><path d="M1 1l7 7M8 1L1 8" stroke="#bbb" stroke-width="0.9"/><circle cx="2" cy="2" r="1" fill="#bbb"/><circle cx="7" cy="7" r="1" fill="#bbb"/></svg><svg class="a" style="left:978px;top:331px;" width="9" height="9" viewBox="0 0 9 9"><path d="M1 1l7 7M8 1L1 8" stroke="#bbb" stroke-width="0.9"/><circle cx="2" cy="2" r="1" fill="#bbb"/><circle cx="7" cy="7" r="1" fill="#bbb"/></svg><div class="a" style="left:996px;top:290.4px;width:8px;height:8px;background:#fff;border:1px solid #888"></div><svg class="a" style="left:996px;top:290.4px;" width="8" height="8" viewBox="0 0 8 8"><path d="M0.5 7.5l7-7" stroke="#e02020" stroke-width="1.1"/></svg><svg class="a" style="left:996px;top:304px;" width="8" height="8" viewBox="0 0 8 8"><rect x="0.5" y="0.5" width="7" height="7" fill="none" stroke="#aaa" stroke-width="0.8"/><path d="M4 0v8M0 4h8" stroke="#aaa" stroke-width="0.6"/></svg><div class="a" style="left:991px;top:331.5px;width:7px;height:7px;background:#8a8a8a;border:0.5px solid #aaa"></div><svg class="a" style="left:998.5px;top:331px;" width="8" height="8" viewBox="0 0 8 8"><rect width="8" height="8" fill="#fff"/><path d="M0 0h4v4H0z" fill="#00b4ff"/><path d="M4 0h4v4H4z" fill="#ff00a0"/><path d="M0 4h4v4H0z" fill="#ffe600"/><path d="M4 4h4v4H4z" fill="#111"/></svg><div class="a" style="left:991px;top:345.0px;width:7px;height:7px;background:#8a8a8a;border:0.5px solid #aaa"></div><svg class="a" style="left:998.5px;top:344.5px;" width="8" height="8" viewBox="0 0 8 8"><rect width="8" height="8" fill="#fff"/><path d="M0 0h4v4H0z" fill="#00b4ff"/><path d="M4 0h4v4H4z" fill="#ff00a0"/><path d="M0 4h4v4H0z" fill="#ffe600"/><path d="M4 4h4v4H4z" fill="#111"/></svg><div class="a" style="left:991px;top:358.5px;width:7px;height:7px;background:#8a8a8a;border:0.5px solid #aaa"></div><svg class="a" style="left:998.5px;top:358px;" width="8" height="8" viewBox="0 0 8 8"><rect width="8" height="8" fill="#fff"/><path d="M0 0h4v4H0z" fill="#00b4ff"/><path d="M4 0h4v4H4z" fill="#ff00a0"/><path d="M0 4h4v4H0z" fill="#ffe600"/><path d="M4 4h4v4H4z" fill="#111"/></svg><div class="a" style="left:991px;top:372.1px;width:7px;height:7px;background:#8a8a8a;border:0.5px solid #aaa"></div><svg class="a" style="left:998.5px;top:371.6px;" width="8" height="8" viewBox="0 0 8 8"><rect width="8" height="8" fill="#fff"/><path d="M0 0h4v4H0z" fill="#00b4ff"/><path d="M4 0h4v4H4z" fill="#ff00a0"/><path d="M0 4h4v4H0z" fill="#ffe600"/><path d="M4 4h4v4H4z" fill="#111"/></svg><div class="a" style="left:1014.8px;top:288px;width:7px;height:95px;background:#4a4a4a;"></div><div class="a" style="left:1015px;top:296px;width:6px;height:34px;background:#686868;border-radius:3px"></div><div class="a" style="left:856.5px;top:383px;width:165.5px;height:1px;background:#4b4b4b;"></div><svg class="a" style="left:860px;top:385px;" width="12" height="12" viewBox="0 0 12 12"><rect x="1" y="1" width="8" height="8" fill="none" stroke="#888" stroke-width="0.9"/><path d="M3 5h4M5 3v4" stroke="#888"/></svg><svg class="a" style="left:946px;top:385px;" width="12" height="12" viewBox="0 0 12 12"><rect x="1" y="1" width="9" height="8" fill="#aaa"/><rect x="3" y="3" width="2" height="2" fill="#535353"/><circle cx="11" cy="9.5" r="0.7" fill="#aaa"/></svg><svg class="a" style="left:964px;top:385px;" width="12" height="12" viewBox="0 0 12 12"><path d="M1 3h4l1 1h5v6H1z" fill="#aaa"/></svg><svg class="a" style="left:982px;top:385px;" width="12" height="12" viewBox="0 0 12 12"><rect x="1" y="1" width="9" height="9" fill="none" stroke="#888"/><path d="M5.5 3v5M3 5.5h5" stroke="#888"/></svg><svg class="a" style="left:998px;top:385px;" width="12" height="12" viewBox="0 0 12 12"><path d="M1 3h8M3 3V1.5h4V3M2 3l.7 8h4.6L8 3" fill="none" stroke="#888" stroke-width="0.9"/></svg><div class="a" style="left:856.5px;top:397.9px;width:165.5px;height:1.8px;background:#393939;"></div><div class="a" style="left:856.5px;top:399.7px;width:165.5px;height:16px;background:#3f3f3f;"></div><div class="a" style="left:856.5px;top:399.7px;width:49px;height:16px;background:#535353;"></div><div class="a" style="left:905.5px;top:399.7px;width:34px;height:16px;background:#484848;"></div><div class="t" style="left:862.68px;top:403.20px;color:#eeeeee;font:bold 9px 'Liberation Sans';transform:scale(0.8182,1.0000);">Pathfinder</div><div class="t" style="left:913.50px;top:403.20px;color:#b8b8b8;font:9px 'Liberation Sans';transform:scale(0.9250,1.0000);">Align</div><div class="a" style="left:856.5px;top:415.7px;width:165.5px;height:173.3px;background:#535353;"></div><div class="t" style="left:859.13px;top:421.70px;color:#e6e6e6;font:8.5px 'Liberation Sans';transform:scale(0.8696,1.0000);">Paths:</div><div class="t" style="left:859.15px;top:459.70px;color:#e6e6e6;font:8.5px 'Liberation Sans';transform:scale(0.8500,1.0000);">Pathfinder:</div><div class="t" style="left:860.00px;top:498.90px;color:#e6e6e6;font:8.5px 'Liberation Sans';transform:scale(0.7881,1.0000);">Convert Shape:</div><div class="t" style="left:860.00px;top:555.00px;color:#e6e6e6;font:8.5px 'Liberation Sans';transform:scale(0.8208,1.0000);">Convert Point:</div><div class="a" style="left:858px;top:455px;width:142px;height:1px;background:#4a4a4a;"></div><div class="a" style="left:858px;top:493.5px;width:142px;height:1px;background:#4a4a4a;"></div><div class="a" style="left:858px;top:549.9px;width:142px;height:1px;background:#4a4a4a;"></div><svg class="a" style="left:861px;top:439px;" width="11" height="11" viewBox="0 0 11 11"><path d="M1 8a6 6 0 0 1 7-6" fill="none" stroke="#ccc"/><circle cx="1" cy="8" r="1" fill="#ccc"/><circle cx="8" cy="2" r="1" fill="#ccc"/></svg><svg class="a" style="left:883.6px;top:439px;" width="11" height="11" viewBox="0 0 11 11"><ellipse cx="5" cy="5.5" rx="4.5" ry="3.5" fill="none" stroke="#bbb"/><circle cx="8" cy="2" r="1.2" fill="#bbb"/></svg><svg class="a" style="left:905.8px;top:439px;" width="11" height="11" viewBox="0 0 11 11"><ellipse cx="5" cy="5.5" rx="4.5" ry="3.5" fill="none" stroke="#bbb"/><circle cx="5" cy="2" r="1" fill="#bbb"/><circle cx="9.5" cy="5.5" r="1" fill="#bbb"/></svg><svg class="a" style="left:928px;top:439px;" width="11" height="11" viewBox="0 0 11 11"><path d="M3 2H1v7h2M7 2h2v7H7" fill="none" stroke="#bbb"/><rect x="3" y="2" width="4" height="7" fill="none" stroke="#bbb" stroke-width="0.6"/></svg><svg class="a" style="left:861px;top:476.5px;" width="12" height="12" viewBox="0 0 12 12"><rect x="0.5" y="0.5" width="7" height="7" fill="#ccc"/><rect x="3.5" y="3.5" width="7" height="7" fill="#aaa" stroke="#ddd" stroke-width="0.7"/></svg><svg class="a" style="left:883.6px;top:476.5px;" width="12" height="12" viewBox="0 0 12 12"><rect x="0.5" y="0.5" width="7" height="7" fill="none" stroke="#ccc"/><rect x="3.5" y="3.5" width="7" height="7" fill="#ccc" fill-opacity="0.6" stroke="#ddd" stroke-width="0.8"/></svg><svg class="a" style="left:905.8px;top:476.5px;" width="12" height="12" viewBox="0 0 12 12"><rect x="0.5" y="0.5" width="7" height="7" fill="none" stroke="#ccc"/><rect x="3.5" y="3.5" width="7" height="7" fill="#ccc" fill-opacity="0.6" stroke="#ddd" stroke-width="0.8"/></svg><svg class="a" style="left:928px;top:476.5px;" width="12" height="12" viewBox="0 0 12 12"><rect x="0.5" y="0.5" width="7" height="7" fill="none" stroke="#ccc"/><rect x="3.5" y="3.5" width="7" height="7" fill="#ccc" fill-opacity="0.6" stroke="#ddd" stroke-width="0.8"/></svg><svg class="a" style="left:950px;top:476.5px;" width="12" height="12" viewBox="0 0 12 12"><rect x="0.5" y="0.5" width="7" height="7" fill="none" stroke="#ccc"/><rect x="3.5" y="3.5" width="7" height="7" fill="#ccc" fill-opacity="0.6" stroke="#ddd" stroke-width="0.8"/></svg><svg class="a" style="left:860.5px;top:514.5px;" width="11" height="11" viewBox="0 0 11 11"><rect x="1" y="2" width="9" height="7" fill="none" stroke="#bbb"/></svg><svg class="a" style="left:883.1px;top:514.5px;" width="11" height="11" viewBox="0 0 11 11"><rect x="1" y="2" width="9" height="7" rx="2" fill="none" stroke="#bbb"/></svg><svg class="a" style="left:905.3px;top:514.5px;" width="11" height="11" viewBox="0 0 11 11"><rect x="1" y="2" width="9" height="7" rx="3.5" fill="none" stroke="#bbb"/></svg><svg class="a" style="left:927.5px;top:514.5px;" width="11" height="11" viewBox="0 0 11 11"><path d="M3 2h5l2 2v3l-2 2H3L1 7V4z" fill="none" stroke="#bbb"/></svg><svg class="a" style="left:949.5px;top:514.5px;" width="11" height="11" viewBox="0 0 11 11"><ellipse cx="5.5" cy="5.5" rx="5" ry="3.5" fill="none" stroke="#bbb"/></svg><svg class="a" style="left:971.5px;top:514.5px;" width="11" height="11" viewBox="0 0 11 11"><path d="M5.5 1.5L10 9.5H1z" fill="none" stroke="#bbb"/></svg><svg class="a" style="left:860.5px;top:533.5px;" width="11" height="11" viewBox="0 0 11 11"><path d="M3 1.5h5L10.5 5.5 8 9.5H3L.5 5.5z" fill="none" stroke="#bbb"/></svg><svg class="a" style="left:883.1px;top:533.5px;" width="11" height="11" viewBox="0 0 11 11"><path d="M1 10L10 1" stroke="#bbb"/></svg><svg class="a" style="left:905.3px;top:533.5px;" width="11" height="11" viewBox="0 0 11 11"><path d="M5.5 1v9M1 5.5h9" stroke="#bbb"/></svg><svg class="a" style="left:860.5px;top:572px;" width="12" height="12" viewBox="0 0 12 12"><circle cx="3" cy="3" r="1.6" fill="#ccc"/><path d="M3 3v7M4 3h5" stroke="#aaa" stroke-width="0.8"/></svg><svg class="a" style="left:883.1px;top:572px;" width="12" height="12" viewBox="0 0 12 12"><circle cx="3" cy="3" r="1.6" fill="#ccc"/><path d="M3 3v7M4 3h5" stroke="#aaa" stroke-width="0.8"/></svg><svg class="a" style="left:905.3px;top:572px;" width="12" height="12" viewBox="0 0 12 12"><circle cx="3" cy="3" r="1.6" fill="#ccc"/><path d="M3 3v7M4 3h5" stroke="#aaa" stroke-width="0.8"/></svg><svg class="a" style="left:927.5px;top:572px;" width="12" height="12" viewBox="0 0 12 12"><circle cx="3" cy="3" r="1.6" fill="#ccc"/><path d="M3 3v7M4 3h5" stroke="#aaa" stroke-width="0.8"/></svg><div class="a" style="left:49px;top:590px;width:926px;height:46px;background:linear-gradient(90deg,#6a77ac 0%,#7577b0 35%,#8778b3 65%,#a57bb8 100%);border-radius:11px;border:1px solid rgba(200,200,230,0.3)"></div><svg class="a" style="left:55.7px;top:596.5px" width="31" height="31" viewBox="0 0 32 32"><defs><linearGradient id="fd" x1="0" y1="0" x2="0" y2="1"><stop offset="0" stop-color="#1ec0ff"/><stop offset="1" stop-color="#1a6ff0"/></linearGradient></defs><rect x="1" y="1" width="30" height="30" rx="7" fill="#eceff3"/><path d="M8 1h9c-2 4-3 9-2.5 14H17c-.5 5 0 10 1 16H8a7 7 0 0 1-7-7V8a7 7 0 0 1 7-7z" fill="url(#fd)"/><path d="M9 10v4M22 10v4" stroke="#222" stroke-width="1.6"/><path d="M7 21c5 4 13 4 18 0" fill="none" stroke="#222" stroke-width="1.3"/></svg><svg class="a" style="left:96px;top:596.5px" width="31" height="31" viewBox="0 0 32 32"><rect x="1" y="1" width="30" height="30" rx="7" fill="#dcdde3"/><rect x="7" y="7" width="5" height="5" rx="1.2" fill="#5bc43a"/><rect x="14" y="7" width="5" height="5" rx="1.2" fill="#f5c322"/><rect x="21" y="7" width="5" height="5" rx="1.2" fill="#f18a1e"/><rect x="7" y="14" width="5" height="5" rx="1.2" fill="#e8333a"/><rect x="14" y="14" width="5" height="5" rx="1.2" fill="#9a9aa0"/><rect x="21" y="14" width="5" height="5" rx="1.2" fill="#ef4e75"/><rect x="7" y="21" width="5" height="5" rx="1.2" fill="#9b59d0"/><rect x="14" y="21" width="5" height="5" rx="1.2" fill="#2a9df4"/><rect x="21" y="21" width="5" height="5" rx="1.2" fill="#39c6a8"/></svg><svg class="a" style="left:136.5px;top:596.5px" width="31" height="31" viewBox="0 0 32 32"><rect x="1" y="1" width="30" height="30" rx="7" fill="#f6f6f6"/><circle cx="16" cy="16" r="12" fill="#2a8df0"/><circle cx="16" cy="16" r="10.5" fill="none" stroke="#8cc8fa" stroke-width="0.6" stroke-dasharray="0.6 1.2"/><path d="M22 9L14 15l2 2z" fill="#f03a30"/><path d="M10 23l4-8 2 2z" fill="#fff"/></svg><svg class="a" style="left:177px;top:596.5px" width="31" height="31" viewBox="0 0 32 32"><defs><linearGradient id="ml" x1="0" y1="0" x2="0" y2="1"><stop offset="0" stop-color="#27c3ff"/><stop offset="1" stop-color="#1b75f0"/></linearGradient></defs><rect x="1" y="1" width="30" height="30" rx="7" fill="url(#ml)"/><rect x="6" y="9" width="20" height="14" rx="1.5" fill="#f4f6f8"/><path d="M6.5 9.5L16 17l9.5-7.5" fill="none" stroke="#b9c4d0" stroke-width="1"/></svg><svg class="a" style="left:217.7px;top:596.5px" width="31" height="31" viewBox="0 0 32 32"><circle cx="16.5" cy="16" r="14.3" fill="#1d9be6"/><circle cx="7" cy="7" r="6" fill="#1d9be6"/><circle cx="25" cy="25" r="6" fill="#1d9be6"/><text x="16.5" y="23" font-family="Liberation Sans" font-weight="bold" font-size="20" fill="#fff" text-anchor="middle">S</text></svg><svg class="a" style="left:257px;top:596.5px" width="31" height="31" viewBox="0 0 32 32"><rect x="1" y="1" width="30" height="30" rx="6" fill="#001e36"/><text x="16" y="22.5" font-family="Liberation Sans" font-weight="bold" font-size="15.5" fill="#31a8ff" text-anchor="middle">Ps</text></svg><svg class="a" style="left:297px;top:596.5px" width="31" height="31" viewBox="0 0 32 32"><rect x="1" y="1" width="30" height="30" rx="6" fill="#330000"/><text x="16" y="22.5" font-family="Liberation Sans" font-weight="bold" font-size="15.5" fill="#ff9a00" text-anchor="middle">Ai</text></svg><svg class="a" style="left:335px;top:594px" width="36" height="36" viewBox="0 0 32 32"><rect x="1" y="1" width="30" height="30" rx="6" fill="#49021f"/><text x="16" y="22.5" font-family="Liberation Sans" font-weight="bold" font-size="15.5" fill="#ff3366" text-anchor="middle">Id</text></svg><svg class="a" style="left:378px;top:596.5px" width="31" height="31" viewBox="0 0 32 32"><rect x="1" y="1" width="30" height="30" rx="6" fill="#00005b"/><text x="16" y="22.5" font-family="Liberation Sans" font-weight="bold" font-size="15.5" fill="#9999ff" text-anchor="middle">Pr</text></svg><svg class="a" style="left:418px;top:596.5px" width="31" height="31" viewBox="0 0 32 32"><rect x="1" y="1" width="30" height="30" rx="7" fill="#f8f8f8"/><path d="M1 8a7 7 0 0 1 7-7h16a7 7 0 0 1 7 7v2H1z" fill="#f04b4b"/><text x="16" y="8.5" font-family="Liberation Sans" font-weight="bold" font-size="6.5" fill="#fff" text-anchor="middle">AUG</text><text x="16" y="26" font-family="Liberation Sans" font-size="15" fill="#333" text-anchor="middle">31</text></svg><svg class="a" style="left:458px;top:596.5px" width="31" height="31" viewBox="0 0 32 32"><rect x="1" y="1" width="30" height="30" rx="7" fill="#efeeea"/><path d="M1 8a7 7 0 0 1 7-7h16a7 7 0 0 1 7 7v1H1z" fill="#f7c531"/><path d="M3 14h26M3 19h26M3 24h26" stroke="#dedbd3" stroke-width="0.6"/></svg><svg class="a" style="left:499px;top:596.5px" width="31" height="31" viewBox="0 0 32 32"><rect x="1" y="1" width="30" height="30" rx="7" fill="#fbfaf8"/><path d="M3 9h26M3 13h26M3 17h26M3 21h26M3 25h26" stroke="#f0d4d4" stroke-width="0.5"/><text x="5" y="17" font-family="Liberation Serif" font-weight="bold" font-size="14" fill="#f0a020">“</text><path d="M24 5L12 24" stroke="#e8a020" stroke-width="3"/><path d="M12 24l-2 4 3-2z" fill="#333"/></svg><svg class="a" style="left:539px;top:596.5px" width="31" height="31" viewBox="0 0 32 32"><rect x="1" y="1" width="30" height="30" rx="7" fill="#f6f6f6"/><circle cx="16" cy="16" r="11.5" fill="#2aa84a"/><path d="M16 4.5a11.5 11.5 0 0 1 10 5.75H16a5.75 5.75 0 0 0-5 2.9L6 9.5A11.5 11.5 0 0 1 16 4.5z" fill="#e94235"/><path d="M26 10.25a11.5 11.5 0 0 1-10 17.25l5-8.6a5.75 5.75 0 0 0 0-5.75z" fill="#fbbc04"/><circle cx="16" cy="16" r="5" fill="#fff"/><circle cx="16" cy="16" r="4" fill="#4a8af4"/></svg><svg class="a" style="left:579px;top:596.5px" width="31" height="31" viewBox="0 0 32 32"><rect x="1" y="1" width="30" height="30" rx="7" fill="#f8f8f8"/><rect x="9" y="13" width="9" height="3.4" rx="1.7" fill="#36c5f0"/><rect x="13.5" y="7" width="3.4" height="9" rx="1.7" fill="#36c5f0"/><rect x="14" y="16" width="9" height="3.4" rx="1.7" fill="#ecb22e"/><rect x="15" y="16" width="3.4" height="9" rx="1.7" fill="#e01e5a"/><rect x="8" y="17.5" width="9" height="3.4" rx="1.7" fill="#e01e5a"/><rect x="19" y="8" width="3.4" height="9" rx="1.7" fill="#2eb67d"/></svg><svg class="a" style="left:617.5px;top:595.5px" width="32.5" height="32.5" viewBox="0 0 32 32"><circle cx="16" cy="16" r="15.5" fill="#fff"/><circle cx="16" cy="16" r="14" fill="#cb1f27"/><path d="M16.5 6.5c-5.3 0-8.3 3.5-8.3 7.3 0 2.1 1 3.9 2.6 4.5.3.1.5 0 .6-.3l.3-1.1c.1-.3 0-.4-.2-.7-.5-.6-.8-1.4-.8-2.5 0-3.1 2.4-6 6.2-6 3.3 0 5.2 2 5.2 4.8 0 3.6-1.6 6.7-4 6.7-1.3 0-2.3-1.1-2-2.4.4-1.6 1.1-3.3 1.1-4.4 0-1-.5-1.9-1.7-1.9-1.3 0-2.4 1.4-2.4 3.200 0 1.2.4 2 .4 2l-1.600 6.600c-.5 2-.1 4.500.1 4.700.1.100.3.100.4 0 .2-.3 1.700-2.400 2.200-4.400l.8-3.200c.4.800 1.700 1.600 3 1.600 4 0 6.700-3.600 6.700-8.400C24.900 9.900 21.600 6.500 16.500 6.500z" fill="#fff"/></svg><svg class="a" style="left:660px;top:596.5px" width="31" height="31" viewBox="0 0 32 32"><rect x="1" y="1" width="30" height="30" rx="7" fill="#d0d0d0"/><rect x="7" y="4" width="18" height="24" rx="2.5" fill="#2a2a2a"/><rect x="9" y="6.5" width="14" height="4.5" fill="#6a6a6a"/><rect x="8.5" y="13.0" width="3" height="3" rx="1.5" fill="#ddd"/><rect x="12.7" y="13.0" width="3" height="3" rx="1.5" fill="#ddd"/><rect x="16.9" y="13.0" width="3" height="3" rx="1.5" fill="#ddd"/><rect x="21.1" y="13.0" width="3" height="3" rx="1.5" fill="#f09a28"/><rect x="8.5" y="17.2" width="3" height="3" rx="1.5" fill="#ddd"/><rect x="12.7" y="17.2" width="3" height="3" rx="1.5" fill="#ddd"/><rect x="16.9" y="17.2" width="3" height="3" rx="1.5" fill="#ddd"/><rect x="21.1" y="17.2" width="3" height="3" rx="1.5" fill="#f09a28"/><rect x="8.5" y="21.4" width="3" height="3" rx="1.5" fill="#ddd"/><rect x="12.7" y="21.4" width="3" height="3" rx="1.5" fill="#ddd"/><rect x="16.9" y="21.4" width="3" height="3" rx="1.5" fill="#ddd"/><rect x="21.1" y="21.4" width="3" height="3" rx="1.5" fill="#f09a28"/></svg><svg class="a" style="left:699.5px;top:596.5px" width="31" height="31" viewBox="0 0 32 32"><defs><linearGradient id="sp" x1="0" y1="0" x2="0" y2="1"><stop offset="0" stop-color="#c8c8c8"/><stop offset="1" stop-color="#8a8a8a"/></linearGradient></defs><rect x="1" y="1" width="30" height="30" rx="7" fill="url(#sp)"/><circle cx="16" cy="16" r="12" fill="#333"/><circle cx="16" cy="16" r="10" fill="none" stroke="#888" stroke-width="1.5"/><circle cx="16" cy="16" r="7" fill="#5a5a5a"/><circle cx="16" cy="16" r="3" fill="#333"/><path d="M16 13V9M13.5 17.5l-3.5 2M18.5 17.5l3.5 2" stroke="#222" stroke-width="1.8"/></svg><div class="a" style="left:744.5px;top:600px;width:1px;height:28px;background:rgba(60,50,90,0.55);"></div><svg class="a" style="left:758.5px;top:596.5px" width="31" height="31" viewBox="0 0 32 32"><rect x="1" y="1" width="30" height="30" rx="7" fill="#f5f7fa"/><rect x="4" y="4" width="24" height="24" rx="4" fill="#d5e3ec"/><path d="M4 4l24 24M28 4L4 28M16 4v24M4 16h24" stroke="#e8f0f5" stroke-width="0.6"/></svg><svg class="a" style="left:798px;top:596.5px" width="31" height="31" viewBox="0 0 32 32"><rect x="1" y="1" width="30" height="30" rx="7" fill="#fbfbfb"/><path d="M9.5 4h13l3.5 3.5-1 3 1 2.5-2.5 10L16 29l-7.5-6L6 13l1-2.5-1-3z" fill="#f1562b"/><path d="M10.5 10.5l3.5 1h4l3.5-1 1.5 2.2-1.8 3.3-2.2.8.4 2.2-3 2.5h-1.8l-3-2.5.4-2.2-2.2-.8L9 12.7z" fill="#fff"/><path d="M14.3 16.8h3.4L16 18.6z" fill="#f1562b"/></svg><svg class="a" style="left:838px;top:596.5px" width="31" height="31" viewBox="0 0 32 32"><rect x="1" y="1" width="30" height="30" rx="6" fill="#b30b00"/><path d="M8.5 23.5C11 20.5 13.5 14 14.8 8.5c.4-1.6 2.2-1.6 2.3.2.2 4 3 8.5 8 9.3 1.8.3 1.5 2.3-.4 2.1-5-.6-10.5.3-14.8 3.800-1.300 1-2.600.700-1.400-.400z" fill="none" stroke="#fff" stroke-width="1.5"/></svg><div class="a" style="left:883.6px;top:600px;width:1px;height:28px;background:rgba(60,50,90,0.55);"></div><div class="a" style="left:894px;top:602px;width:36px;height:20px;background:#eceaea;"></div><svg class="a" style="left:917px;top:616px" width="10" height="10" viewBox="0 0 32 32"><circle cx="16" cy="16" r="15" fill="#fff"/><circle cx="16" cy="16" r="11.5" fill="#2aa84a"/><path d="M16 4.5a11.5 11.5 0 0 1 10 5.75H16a5.75 5.75 0 0 0-5 2.9L6 9.5A11.5 11.5 0 0 1 16 4.5z" fill="#e94235"/><path d="M26 10.25a11.5 11.5 0 0 1-10 17.25l5-8.6a5.75 5.75 0 0 0 0-5.75z" fill="#fbbc04"/><circle cx="16" cy="16" r="4.5" fill="#4a8af4" stroke="#fff" stroke-width="1.5"/></svg><svg class="a" style="left:937.5px;top:595.5px" width="31" height="31" viewBox="0 0 32 32"><defs><linearGradient id="tr" x1="0" y1="0" x2="1" y2="0"><stop offset="0" stop-color="#c8c8cc"/><stop offset="0.5" stop-color="#f0f0f2"/><stop offset="1" stop-color="#b8b8bc"/></linearGradient></defs><path d="M5 6h22l-2.5 24h-17z" fill="url(#tr)" opacity="0.9"/><ellipse cx="16" cy="6" rx="11" ry="2.5" fill="#d8d8dc"/><path d="M9 5l3-2 4 2 3-2 4 2" stroke="#6a8a9a" stroke-width="1.2" fill="none"/></svg><div class="a" style="left:70px;top:633.5px;width:2px;height:2px;border-radius:50%;background:#1c1c28"></div><div class="a" style="left:311.5px;top:633.5px;width:2px;height:2px;border-radius:50%;background:#1c1c28"></div><div class="a" style="left:351.8px;top:633.5px;width:2px;height:2px;border-radius:50%;background:#1c1c28"></div><div class="a" style="left:512.5px;top:633.5px;width:2px;height:2px;border-radius:50%;background:#1c1c28"></div><div class="a" style="left:553px;top:633.5px;width:2px;height:2px;border-radius:50%;background:#1c1c28"></div><div class="a" style="left:593px;top:633.5px;width:2px;height:2px;border-radius:50%;background:#1c1c28"></div><div class="a" style="left:852.8px;top:633.5px;width:2px;height:2px;border-radius:50%;background:#1c1c28"></div>
</body></html>
